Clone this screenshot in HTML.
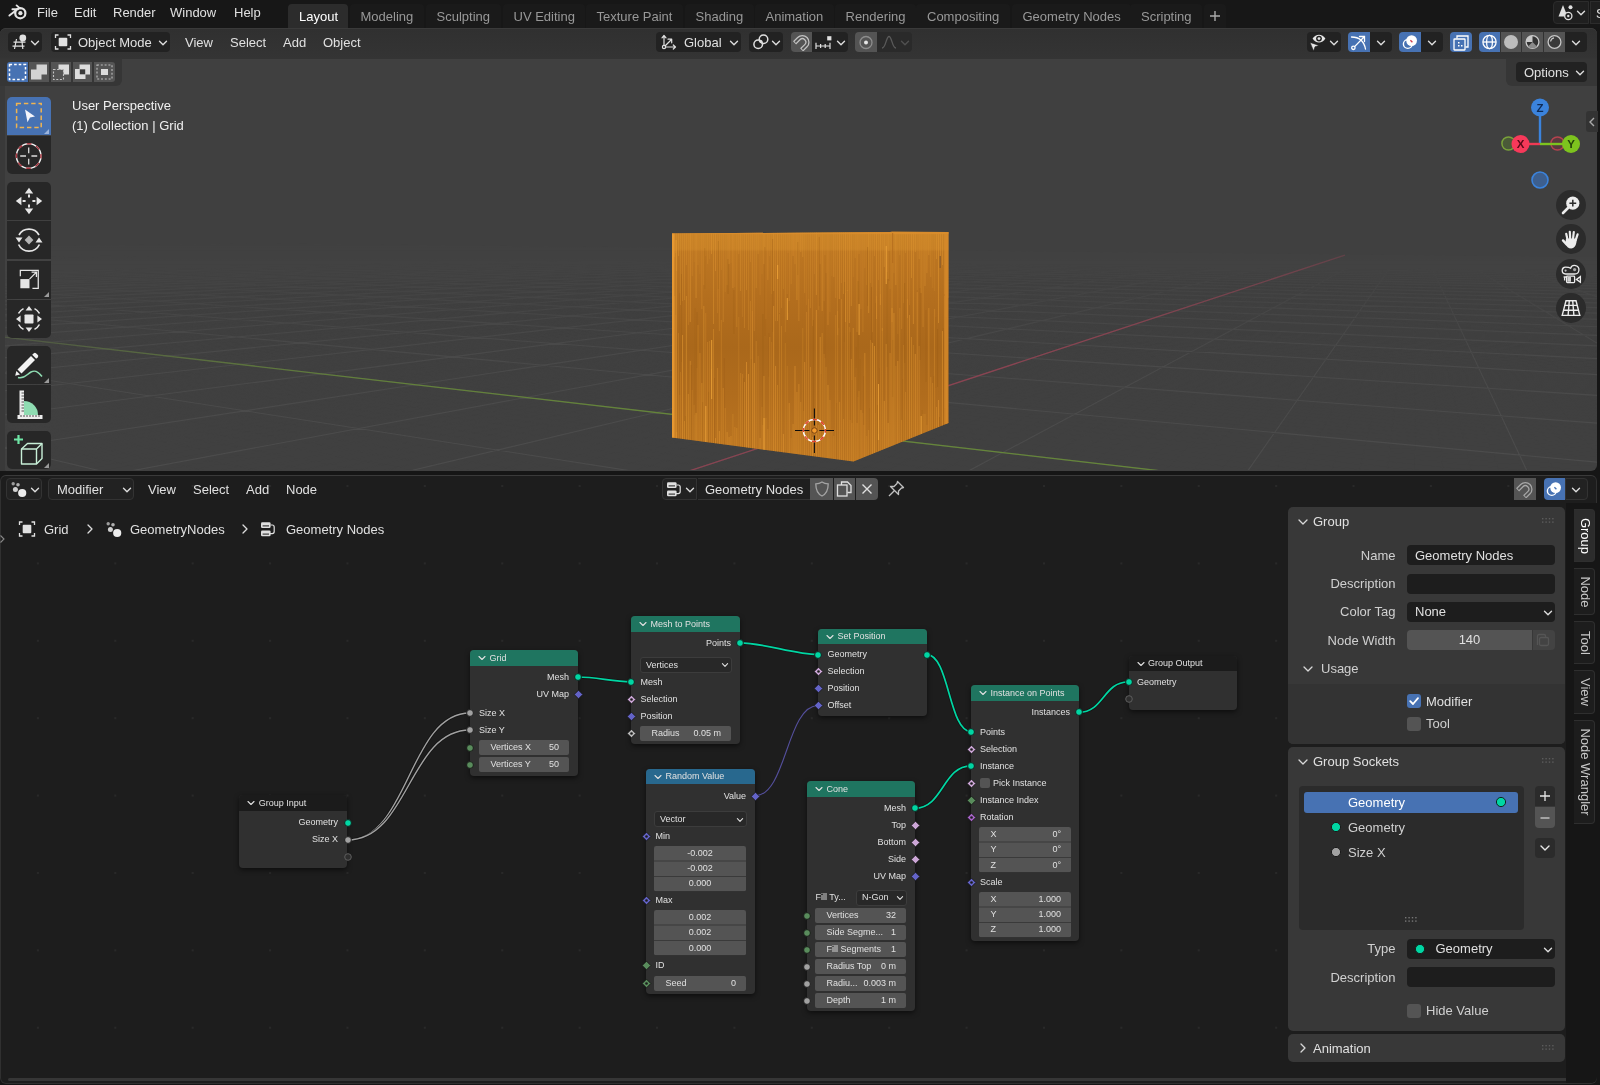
<!DOCTYPE html>
<html><head><meta charset="utf-8"><title>Blender</title><style>
html,body{margin:0;padding:0;background:#161616;}
body{width:1600px;height:1085px;position:relative;overflow:hidden;font-family:"Liberation Sans",sans-serif;font-size:13px;color:#e0e0e0;}
div,span,svg{position:absolute;box-sizing:border-box}
#root{left:0;top:0;width:1600px;height:1085px;will-change:transform;overflow:hidden}
.t{white-space:nowrap;line-height:16px;height:16px}
.dim{color:#989898}
.btn{background:#222;border-radius:4px}
.blue{background:#4772b3}
.gray{background:#545454}
.nt{white-space:nowrap;font-size:9px;line-height:11px;height:11px;color:#e0e0e0}
.node{border-radius:4px;background:#303030;box-shadow:0 2px 5px rgba(0,0,0,.55)}
.nh{left:0;top:0;right:0;height:17px;border-radius:4px 4px 0 0}
.fld{background:#545454;border-radius:2px;height:15px}
.dd{background:#282828;border:1px solid #3c3c3c;border-radius:3px;height:16px}
.panel{background:#383838;border-radius:5px}
.tf{background:#1d1d1d;border-radius:4px;height:20px}
</style></head><body><div id="root">
<div class="" style="left:0px;top:0px;width:1600px;height:28px;background:#171717"></div>
<svg style="left:5.6px;top:1.4px;" width="24" height="22" viewBox="0 0 24 22">
<g fill="none" stroke="#e6e6e6" stroke-linecap="round">
<path d="M3.4 14.6 L11.4 8.2 M6.4 8.2 H12 M10.6 4.4 L14 7.4" stroke-width="1.9"/>
<circle cx="14.3" cy="12.2" r="5.1" stroke-width="2.2"/>
</g><circle cx="14.4" cy="12.2" r="2.1" fill="#e6e6e6"/></svg>
<span class="t " style="left:37px;top:4.9px;">File</span>
<span class="t " style="left:74px;top:4.9px;">Edit</span>
<span class="t " style="left:113px;top:4.9px;">Render</span>
<span class="t " style="left:170px;top:4.9px;">Window</span>
<span class="t " style="left:234px;top:4.9px;">Help</span>
<div class="" style="left:288px;top:4px;width:60px;height:24px;background:#2c2c2c;border-radius:4px 4px 0 0"></div>
<span class="t " style="left:299px;top:8.5px;color:#fff">Layout</span>
<div class="" style="left:349.5px;top:4px;width:74.30000000000001px;height:24px;background:#1a1a1a;border-radius:4px 4px 0 0"></div>
<span class="t dim" style="left:360.5px;top:8.5px;">Modeling</span>
<div class="" style="left:425.5px;top:4px;width:75.0px;height:24px;background:#1a1a1a;border-radius:4px 4px 0 0"></div>
<span class="t dim" style="left:436.5px;top:8.5px;">Sculpting</span>
<div class="" style="left:502.5px;top:4px;width:82.89999999999998px;height:24px;background:#1a1a1a;border-radius:4px 4px 0 0"></div>
<span class="t dim" style="left:513.5px;top:8.5px;">UV Editing</span>
<div class="" style="left:585.5px;top:4px;width:97.39999999999998px;height:24px;background:#1a1a1a;border-radius:4px 4px 0 0"></div>
<span class="t dim" style="left:596.5px;top:8.5px;">Texture Paint</span>
<div class="" style="left:684.5px;top:4px;width:69.20000000000005px;height:24px;background:#1a1a1a;border-radius:4px 4px 0 0"></div>
<span class="t dim" style="left:695.5px;top:8.5px;">Shading</span>
<div class="" style="left:754.5px;top:4px;width:79.29999999999995px;height:24px;background:#1a1a1a;border-radius:4px 4px 0 0"></div>
<span class="t dim" style="left:765.5px;top:8.5px;">Animation</span>
<div class="" style="left:834.5px;top:4px;width:81.5px;height:24px;background:#1a1a1a;border-radius:4px 4px 0 0"></div>
<span class="t dim" style="left:845.5px;top:8.5px;">Rendering</span>
<div class="" style="left:916px;top:4px;width:93.79999999999995px;height:24px;background:#1a1a1a;border-radius:4px 4px 0 0"></div>
<span class="t dim" style="left:927px;top:8.5px;">Compositing</span>
<div class="" style="left:1011.5px;top:4px;width:119.79999999999995px;height:24px;background:#1a1a1a;border-radius:4px 4px 0 0"></div>
<span class="t dim" style="left:1022.5px;top:8.5px;">Geometry Nodes</span>
<div class="" style="left:1130px;top:4px;width:72.09999999999991px;height:24px;background:#1a1a1a;border-radius:4px 4px 0 0"></div>
<span class="t dim" style="left:1141px;top:8.5px;">Scripting</span>
<div class="" style="left:1204px;top:4px;width:22px;height:24px;background:#1a1a1a;border-radius:4px 4px 0 0"></div>
<svg style="left:1209px;top:10px;" width="12" height="12" viewBox="0 0 12 12"><path d="M6 1 V11 M1 6 H11" stroke="#aaa" stroke-width="1.4" fill="none"/></svg>
<div class="" style="left:1553px;top:1px;width:36px;height:23px;background:#1f1f1f;border-radius:4px 0 0 4px;border:1px solid #2c2c2c"></div>
<div class="" style="left:1590px;top:1px;width:14px;height:23px;background:#1f1f1f;border:1px solid #2c2c2c"></div>
<svg style="left:1556px;top:3px;" width="20" height="19" viewBox="0 0 20 19"><path d="M7 2 L11.5 13.5 H2.5 Z" fill="#e0e0e0"/><circle cx="14.5" cy="4.3" r="2" fill="#e0e0e0"/><circle cx="12.3" cy="13" r="3.6" fill="#1f1f1f" stroke="#e0e0e0" stroke-width="1.3"/><circle cx="12.3" cy="13" r="1.2" fill="#e0e0e0"/></svg>
<svg style="left:1575px;top:7px" width="12" height="12" viewBox="-6 -6 12 12"><path d="M-3.5 -1.75 L0 1.75 L3.5 -1.75" fill="none" stroke="#ddd" stroke-width="1.4" stroke-linecap="round" stroke-linejoin="round"/></svg>
<span class="t " style="left:1596px;top:5.5px;">S</span>
<div class="" style="left:0px;top:28px;width:1597px;height:442.5px;background:#404040;border-radius:6px;overflow:hidden"></div>
<div class="" style="left:0px;top:28px;width:1597px;height:30.5px;background:linear-gradient(#303030,#343434);border-radius:6px 6px 0 0;border-top:1px solid #3a3a3a"></div>
<div class="btn" style="left:8px;top:32px;width:34px;height:20px;"></div>
<svg style="left:11px;top:33px;" width="18" height="18" viewBox="0 0 18 18"><g stroke="#e0e0e0" stroke-width="1.2" fill="none"><path d="M2.5 9.2 H14.5 M1.5 13.2 H13.5 M5.5 6 L3.5 16 M10.8 6.5 L11.8 16"/></g><circle cx="11.8" cy="5" r="3.4" fill="#e0e0e0"/></svg>
<svg style="left:29px;top:37px" width="12" height="12" viewBox="-6 -6 12 12"><path d="M-3.5 -1.75 L0 1.75 L3.5 -1.75" fill="none" stroke="#ddd" stroke-width="1.4" stroke-linecap="round" stroke-linejoin="round"/></svg>
<div class="btn" style="left:51px;top:32px;width:119px;height:20px;"></div>
<svg style="left:54px;top:33px;" width="18" height="18" viewBox="0 0 18 18"><g stroke="#e0e0e0" stroke-width="1.3" fill="none"><path d="M1.5 5 V2 H4.5 M13.5 2 H16.5 V5 M16.5 13 V16 H13.5 M4.5 16 H1.5 V13"/></g><rect x="4.7" y="4.7" width="8.6" height="8.6" rx="1" fill="#e0e0e0"/></svg>
<span class="t " style="left:78px;top:35.1px;">Object Mode</span>
<svg style="left:157px;top:37px" width="12" height="12" viewBox="-6 -6 12 12"><path d="M-3.5 -1.75 L0 1.75 L3.5 -1.75" fill="none" stroke="#ddd" stroke-width="1.4" stroke-linecap="round" stroke-linejoin="round"/></svg>
<span class="t " style="left:185px;top:35.1px;">View</span>
<span class="t " style="left:230px;top:35.1px;">Select</span>
<span class="t " style="left:283px;top:35.1px;">Add</span>
<span class="t " style="left:323px;top:35.1px;">Object</span>
<div class="btn" style="left:656px;top:32px;width:85px;height:20px;"></div>
<svg style="left:659px;top:33px;" width="20" height="18" viewBox="0 0 20 18"><g stroke="#e0e0e0" stroke-width="1.2" fill="none" stroke-linecap="round" stroke-linejoin="round"><path d="M5 14 V2.5 M3 4.8 L5 2.5 L7 4.8 M5 14 H16.5 M14.3 12 L16.5 14 L14.3 16 M5.5 13.5 L12.5 6.5 M9 6.2 H12.7 V9.8"/><circle cx="5" cy="14" r="1.6" fill="#222"/></g></svg>
<span class="t " style="left:684px;top:35.1px;">Global</span>
<svg style="left:728px;top:37px" width="12" height="12" viewBox="-6 -6 12 12"><path d="M-3.5 -1.75 L0 1.75 L3.5 -1.75" fill="none" stroke="#ddd" stroke-width="1.4" stroke-linecap="round" stroke-linejoin="round"/></svg>
<div class="btn" style="left:749px;top:32px;width:34px;height:20px;"></div>
<svg style="left:751px;top:33px;" width="20" height="18" viewBox="0 0 20 18"><g stroke="#e0e0e0" stroke-width="1.5" fill="none"><circle cx="7.2" cy="11.3" r="4.3"/><circle cx="12.5" cy="6.3" r="4.3"/></g><circle cx="10" cy="8.6" r="1.5" fill="#e0e0e0"/></svg>
<svg style="left:770px;top:37px" width="12" height="12" viewBox="-6 -6 12 12"><path d="M-3.5 -1.75 L0 1.75 L3.5 -1.75" fill="none" stroke="#ddd" stroke-width="1.4" stroke-linecap="round" stroke-linejoin="round"/></svg>
<div class="gray" style="left:791px;top:32px;width:21px;height:20px;border-radius:4px 0 0 4px"></div>
<svg style="left:792px;top:33px;" width="20" height="18" viewBox="0 0 20 18"><g transform="rotate(-135 10 9.5)"><path d="M5 4 V10 A5 5 0 0 0 15 10 V4" stroke="#c4c4c4" stroke-width="4.4" fill="none"/><path d="M5 4.9 V10 A5 5 0 0 0 15 10 V4.9" stroke="#545454" stroke-width="1.9" fill="none"/></g></svg>
<div class="btn" style="left:812px;top:32px;width:36px;height:20px;border-radius:0 4px 4px 0"></div>
<svg style="left:814px;top:33px;" width="20" height="18" viewBox="0 0 20 18"><g stroke="#e0e0e0" stroke-width="1.2" fill="none"><path d="M2 13 H16 M2 9.8 V16 M6.6 11 V15 M11.2 11 V15 M16 9.8 V16"/></g><rect x="13.2" y="3.2" width="4.2" height="4.2" fill="#e0e0e0"/></svg>
<svg style="left:835px;top:37px" width="12" height="12" viewBox="-6 -6 12 12"><path d="M-3.5 -1.75 L0 1.75 L3.5 -1.75" fill="none" stroke="#ddd" stroke-width="1.4" stroke-linecap="round" stroke-linejoin="round"/></svg>
<div class="gray" style="left:855px;top:32px;width:22px;height:20px;border-radius:4px 0 0 4px"></div>
<svg style="left:856px;top:33px;" width="20" height="18" viewBox="0 0 20 18"><circle cx="10" cy="9.5" r="6" stroke="#8d8d8d" stroke-width="1.3" fill="none"/><circle cx="10" cy="9.5" r="2" fill="#e6e6e6"/></svg>
<div class="" style="left:877px;top:32px;width:35px;height:20px;background:#2a2a2a;border-radius:0 4px 4px 0"></div>
<svg style="left:880px;top:33px;" width="20" height="18" viewBox="0 0 20 18"><path d="M2 15 C6 15 6 3.5 9 3.5 C12 3.5 12 15 16 15" stroke="#5a5a5a" stroke-width="1.3" fill="none"/></svg>
<svg style="left:899px;top:37px" width="12" height="12" viewBox="-6 -6 12 12"><path d="M-3.5 -1.75 L0 1.75 L3.5 -1.75" fill="none" stroke="#505050" stroke-width="1.4" stroke-linecap="round" stroke-linejoin="round"/></svg>
<div class="btn" style="left:1307px;top:32px;width:34px;height:20px;"></div>
<svg style="left:1309px;top:32px;" width="22" height="20" viewBox="0 0 22 20"><path d="M3.6 6.6 C6.6 1.4 13.4 1.4 16.4 6.6 C13.4 11.8 6.6 11.8 3.6 6.6 Z" fill="#e6e6e6"/><circle cx="10" cy="6.6" r="2.9" fill="#222"/><circle cx="10" cy="6.6" r="1.4" fill="#e6e6e6"/><path d="M1 10.4 L10 13.4 L6 14.8 L4.6 19 Z" fill="#e6e6e6" stroke="#222" stroke-width="0.6"/></svg>
<svg style="left:1328px;top:37px" width="12" height="12" viewBox="-6 -6 12 12"><path d="M-3.5 -1.75 L0 1.75 L3.5 -1.75" fill="none" stroke="#ddd" stroke-width="1.4" stroke-linecap="round" stroke-linejoin="round"/></svg>
<div class="blue" style="left:1348px;top:32px;width:22px;height:20px;border-radius:4px 0 0 4px"></div>
<svg style="left:1349px;top:33px;" width="20" height="18" viewBox="0 0 20 18"><g stroke="#fff" stroke-width="1.3" fill="none" stroke-linecap="round"><path d="M2.5 4 C10 4 15 8 16.5 16"/><path d="M5.6 13.6 L15 4 M10.5 3.5 H15.5 V8.5"/><circle cx="4.4" cy="14.8" r="1.7"/></g></svg>
<div class="btn" style="left:1370px;top:32px;width:22px;height:20px;border-radius:0 4px 4px 0"></div>
<svg style="left:1375px;top:37px" width="12" height="12" viewBox="-6 -6 12 12"><path d="M-3.5 -1.75 L0 1.75 L3.5 -1.75" fill="none" stroke="#ddd" stroke-width="1.4" stroke-linecap="round" stroke-linejoin="round"/></svg>
<div class="blue" style="left:1399px;top:32px;width:22px;height:20px;border-radius:4px 0 0 4px"></div>
<svg style="left:1400px;top:33px;" width="20" height="18" viewBox="0 0 20 18"><circle cx="11.6" cy="7.6" r="5.4" fill="#fff"/><circle cx="7.8" cy="11" r="4.4" stroke="#fff" stroke-width="1.4" fill="none"/><path d="M10.4 7.2 L12.4 9.2" stroke="#d23a4a" stroke-width="1.3"/></svg>
<div class="btn" style="left:1421px;top:32px;width:22px;height:20px;border-radius:0 4px 4px 0"></div>
<svg style="left:1426px;top:37px" width="12" height="12" viewBox="-6 -6 12 12"><path d="M-3.5 -1.75 L0 1.75 L3.5 -1.75" fill="none" stroke="#ddd" stroke-width="1.4" stroke-linecap="round" stroke-linejoin="round"/></svg>
<div class="blue" style="left:1450px;top:32px;width:22px;height:20px;border-radius:4px"></div>
<svg style="left:1451px;top:33px;" width="20" height="18" viewBox="0 0 20 18"><g stroke="#fff" stroke-width="1.3" fill="none"><path d="M6 5.5 V3 H17 V14 H14.5"/><rect x="3" y="6" width="11" height="11" rx="0.5"/></g><rect x="7" y="9" width="1.5" height="1.5" fill="#fff"/><rect x="10" y="12" width="1.5" height="1.5" fill="#fff"/><rect x="7" y="12" width="1.5" height="1.5" fill="#fff"/></svg>
<div class="blue" style="left:1479px;top:32px;width:21px;height:20px;border-radius:4px 0 0 4px"></div>
<svg style="left:1480px;top:33px;" width="20" height="18" viewBox="0 0 20 18"><g stroke="#fff" stroke-width="1.3" fill="none"><circle cx="9.5" cy="9" r="6.6"/><ellipse cx="9.5" cy="9" rx="2.9" ry="6.6"/><path d="M3 9 H16"/></g></svg>
<div class="gray" style="left:1501px;top:32px;width:20px;height:20px;"></div>
<svg style="left:1501px;top:33px;" width="20" height="18" viewBox="0 0 20 18"><circle cx="10" cy="9" r="7" fill="#bdbdbd"/></svg>
<div class="gray" style="left:1522px;top:32px;width:21px;height:20px;"></div>
<svg style="left:1522px;top:33px;" width="21" height="18" viewBox="0 0 21 18"><circle cx="10.5" cy="9" r="6.4" fill="#333" stroke="#c8c8c8" stroke-width="1.3"/><path d="M10.5 9 V2.6 A6.4 6.4 0 0 0 4.1 9 Z" fill="#c8c8c8"/><path d="M10.5 9 L15 13.5 A6.4 6.4 0 0 1 6 13.5 Z" fill="#8a8a8a"/></svg>
<div class="gray" style="left:1544px;top:32px;width:21px;height:20px;"></div>
<svg style="left:1544px;top:33px;" width="21" height="18" viewBox="0 0 21 18"><circle cx="10.5" cy="9" r="6.4" fill="#3a3a3a" stroke="#c8c8c8" stroke-width="1.3"/><path d="M6.6 8.5 A4.2 4.2 0 0 1 10 4.8" stroke="#c8c8c8" stroke-width="1.2" fill="none"/></svg>
<div class="btn" style="left:1565px;top:32px;width:22px;height:20px;border-radius:0 4px 4px 0"></div>
<svg style="left:1570px;top:37px" width="12" height="12" viewBox="-6 -6 12 12"><path d="M-3.5 -1.75 L0 1.75 L3.5 -1.75" fill="none" stroke="#ddd" stroke-width="1.4" stroke-linecap="round" stroke-linejoin="round"/></svg>
<svg style="left:0;top:57px" width="1597" height="413" viewBox="0 57 1597 413">
<defs><linearGradient id="fade" x1="0" y1="232" x2="0" y2="470" gradientUnits="userSpaceOnUse"><stop offset="0" stop-color="#fff" stop-opacity="0"/><stop offset="0.12" stop-color="#fff" stop-opacity="0.15"/><stop offset="0.5" stop-color="#fff" stop-opacity="0.8"/><stop offset="1" stop-color="#fff" stop-opacity="1"/></linearGradient>
<linearGradient id="gfade" x1="0" y1="0" x2="700" y2="0" gradientUnits="userSpaceOnUse"><stop offset="0" stop-color="#65853a" stop-opacity="0.25"/><stop offset="0.5" stop-color="#65853a" stop-opacity="0.9"/><stop offset="1" stop-color="#65853a" stop-opacity="1"/></linearGradient>
<linearGradient id="fade2" x1="0" y1="232" x2="0" y2="470" gradientUnits="userSpaceOnUse"><stop offset="0" stop-color="#fff" stop-opacity="0.15"/><stop offset="0.15" stop-color="#fff" stop-opacity="0.6"/><stop offset="0.45" stop-color="#fff" stop-opacity="1"/><stop offset="1" stop-color="#fff" stop-opacity="1"/></linearGradient>
<mask id="gm2" maskUnits="userSpaceOnUse" x="0" y="57" width="1597" height="413"><rect x="0" y="232" width="1597" height="240" fill="url(#fade2)"/></mask>
<mask id="gm" maskUnits="userSpaceOnUse" x="0" y="57" width="1597" height="413"><rect x="0" y="232" width="1597" height="240" fill="url(#fade)"/></mask></defs>
<g mask="url(#gm)" fill="none">
<path d="M5244.0 1224.5 L1811.8 334.8 M5128.0 1224.5 L1797.8 334.3 M5012.0 1224.5 L1783.9 333.8 M4896.0 1224.5 L1770.2 333.3 M4780.0 1224.5 L1756.6 332.8 M4664.0 1224.5 L1743.2 332.3 M4548.0 1224.5 L1729.9 331.7 M4432.0 1224.5 L1716.7 331.2 M4316.0 1224.5 L1703.7 330.8 M4084.0 1224.5 L1678.0 329.8 M3968.0 1224.5 L1665.3 329.3 M3852.0 1224.5 L1652.8 328.8 M3736.0 1224.5 L1640.3 328.4 M3620.0 1224.5 L1628.0 327.9 M3504.0 1224.5 L1615.9 327.4 M3388.0 1224.5 L1603.8 327.0 M3272.0 1224.5 L1591.9 326.5 M-1576.8 1224.5 L-988.9 355.9 M3156.0 1224.5 L1580.0 326.1 M-1356.4 1224.5 L-960.7 354.5 M2924.0 1224.5 L1556.7 325.2 M-915.6 1224.5 L-906.3 351.7 M2808.0 1224.5 L1545.2 324.8 M-695.2 1224.5 L-880.0 350.3 M2692.0 1224.5 L1533.8 324.3 M-474.8 1224.5 L-854.3 349.0 M2576.0 1224.5 L1522.5 323.9 M-254.4 1224.5 L-829.2 347.7 M2460.0 1224.5 L1511.3 323.5 M-34.0 1224.5 L-804.6 346.4 M2344.0 1224.5 L1500.2 323.1 M186.4 1224.5 L-780.6 345.2 M2228.0 1224.5 L1489.2 322.6 M406.8 1224.5 L-757.0 344.0 M2112.0 1224.5 L1478.4 322.2 M627.2 1224.5 L-734.0 342.8 M1996.0 1224.5 L1467.6 321.8 M847.6 1224.5 L-711.4 341.6 M1764.0 1224.5 L1446.3 321.0 M1288.4 1224.5 L-667.7 339.4 M1648.0 1224.5 L1435.8 320.6 M1508.8 1224.5 L-646.6 338.3 M1532.0 1224.5 L1425.4 320.2 M1729.2 1224.5 L-625.8 337.2 M1416.0 1224.5 L1415.1 319.8 M1949.6 1224.5 L-605.5 336.1 M1300.0 1224.5 L1404.9 319.4 M2170.0 1224.5 L-585.5 335.1 M1184.0 1224.5 L1394.7 319.1 M2390.4 1224.5 L-566.0 334.1 M1068.0 1224.5 L1384.7 318.7 M2610.8 1224.5 L-546.8 333.1 M952.0 1224.5 L1374.7 318.3 M2831.2 1224.5 L-528.0 332.2 M836.0 1224.5 L1364.9 317.9 M3051.6 1224.5 L-509.5 331.2 M604.0 1224.5 L1345.4 317.2 M3492.4 1224.5 L-473.7 329.4 M488.0 1224.5 L1335.8 316.8 M3712.8 1224.5 L-456.2 328.5 M372.0 1224.5 L1326.2 316.5 M3933.2 1224.5 L-439.1 327.6 M256.0 1224.5 L1316.8 316.1 M4153.6 1224.5 L-422.3 326.7 M140.0 1224.5 L1307.4 315.8 M4374.0 1224.5 L-405.8 325.9 M24.0 1224.5 L1298.1 315.4 M4594.4 1224.5 L-389.6 325.0 M-92.0 1224.5 L1288.9 315.1 M4814.8 1224.5 L-373.7 324.2 M-208.0 1224.5 L1279.8 314.7 M5035.2 1224.5 L-358.0 323.4 M-324.0 1224.5 L1270.7 314.4 M5255.6 1224.5 L-342.6 322.6 M-556.0 1224.5 L1252.8 313.7 M5696.4 1224.5 L-312.7 321.1 M-672.0 1224.5 L1243.9 313.4 M5916.8 1224.5 L-298.1 320.3 M-788.0 1224.5 L1235.2 313.0 M6137.2 1224.5 L-283.7 319.6 M-904.0 1224.5 L1226.5 312.7 M6357.6 1224.5 L-269.6 318.8 M-1020.0 1224.5 L1217.8 312.4 M6578.0 1224.5 L-255.7 318.1 M-1136.0 1224.5 L1209.3 312.0 M6798.4 1224.5 L-242.1 317.4 M-1252.0 1224.5 L1200.8 311.7 M7018.8 1224.5 L-228.6 316.7 M-1368.0 1224.5 L1192.4 311.4 M7239.2 1224.5 L-215.4 316.0 M-1484.0 1224.5 L1184.0 311.1 M7459.6 1224.5 L-202.4 315.4 M-1716.0 1224.5 L1167.5 310.5 M7900.4 1224.5 L-177.0 314.1 M-1832.0 1224.5 L1159.3 310.1 M8120.8 1224.5 L-164.6 313.4 M-1948.0 1224.5 L1151.2 309.8 M8341.2 1224.5 L-152.4 312.8 M-2064.0 1224.5 L1143.2 309.5 M8561.6 1224.5 L-140.3 312.2 M-2180.0 1224.5 L1135.2 309.2 M8782.0 1224.5 L-128.5 311.6 M-2296.0 1224.5 L1127.3 308.9 M9002.4 1224.5 L-116.8 311.0 M-2412.0 1224.5 L1119.5 308.6 M9222.8 1224.5 L-105.3 310.4 M-2528.0 1224.5 L1111.7 308.3 M9443.2 1224.5 L-94.0 309.8 M-2644.0 1224.5 L1104.0 308.1 M9663.6 1224.5 L-82.9 309.2 M-2876.0 1224.5 L1088.7 307.5 M10104.4 1224.5 L-61.0 308.1 M-2992.0 1224.5 L1081.1 307.2 M10324.8 1224.5 L-50.4 307.5 M-3108.0 1224.5 L1073.6 306.9 M10545.2 1224.5 L-39.9 307.0 M-3224.0 1224.5 L1066.2 306.6 M10765.6 1224.5 L-29.5 306.5 M-3340.0 1224.5 L1058.8 306.3 M10986.0 1224.5 L-19.3 305.9 M-3456.0 1224.5 L1051.5 306.1 M11206.4 1224.5 L-9.2 305.4 M-3572.0 1224.5 L1044.2 305.8 M11426.8 1224.5 L0.8 304.9 M-3688.0 1224.5 L1037.0 305.5 M11647.2 1224.5 L10.6 304.4 M-3804.0 1224.5 L1029.8 305.2 M11867.6 1224.5 L20.2 303.9 M-4036.0 1224.5 L1015.7 304.7 M12308.4 1224.5 L39.2 302.9 M-4152.0 1224.5 L1008.6 304.4 M12528.8 1224.5 L48.4 302.4 M-4268.0 1224.5 L1001.7 304.2 M12749.2 1224.5 L57.6 302.0 M-4384.0 1224.5 L994.8 303.9 M12969.6 1224.5 L66.6 301.5 M-4500.0 1224.5 L987.9 303.7 M13190.0 1224.5 L75.5 301.0 M-4616.0 1224.5 L981.1 303.4 M13410.4 1224.5 L84.3 300.6 M-4732.0 1224.5 L974.4 303.1 M13630.8 1224.5 L93.0 300.1 M-4848.0 1224.5 L967.6 302.9 M13851.2 1224.5 L101.6 299.7 M-4964.0 1224.5 L961.0 302.6 M14071.6 1224.5 L110.0 299.3 M-5196.0 1224.5 L947.8 302.1 M14512.4 1224.5 L126.6 298.4 M-5312.0 1224.5 L941.3 301.9 M14732.8 1224.5 L134.7 298.0 M-5428.0 1224.5 L934.8 301.6 M14953.2 1224.5 L142.8 297.6 M-5544.0 1224.5 L928.4 301.4 M15173.6 1224.5 L150.7 297.2 M-5660.0 1224.5 L922.0 301.2 M15394.0 1224.5 L158.6 296.8 M-5776.0 1224.5 L915.6 300.9 M15614.4 1224.5 L166.3 296.4 M-5892.0 1224.5 L909.3 300.7 M15834.8 1224.5 L173.9 296.0 M-6008.0 1224.5 L903.1 300.4 M16055.2 1224.5 L181.5 295.6 M-6124.0 1224.5 L896.9 300.2 M16275.6 1224.5 L189.0 295.2 M-6356.0 1224.5 L884.6 299.7 M16716.4 1224.5 L203.6 294.4 M-6472.0 1224.5 L878.5 299.5 M16936.8 1224.5 L210.8 294.1 M-6588.0 1224.5 L872.4 299.3 M17157.2 1224.5 L217.9 293.7 M-6704.0 1224.5 L866.4 299.1 M17377.6 1224.5 L225.0 293.3 M-6820.0 1224.5 L860.5 298.8 M17598.0 1224.5 L231.9 293.0 M-6936.0 1224.5 L854.5 298.6 M17818.4 1224.5 L238.8 292.6 M-7052.0 1224.5 L848.6 298.4 M18038.8 1224.5 L245.5 292.3 M-7168.0 1224.5 L842.8 298.2 M18259.2 1224.5 L252.3 291.9 M-7284.0 1224.5 L837.0 297.9 M18479.6 1224.5 L258.9 291.6 M-7516.0 1224.5 L825.5 297.5 M18920.4 1224.5 L271.9 290.9 M-7632.0 1224.5 L819.8 297.3 M19140.8 1224.5 L278.3 290.6 M-7748.0 1224.5 L814.1 297.1 M19361.2 1224.5 L284.7 290.3 M-7864.0 1224.5 L808.5 296.9 M19581.6 1224.5 L290.9 289.9 M-7980.0 1224.5 L802.9 296.7 M19802.0 1224.5 L297.1 289.6 M-8096.0 1224.5 L797.4 296.4 M20022.4 1224.5 L303.3 289.3 M-8212.0 1224.5 L791.9 296.2 M20242.8 1224.5 L309.3 289.0 M-8328.0 1224.5 L786.4 296.0 M20463.2 1224.5 L315.3 288.7 M-8444.0 1224.5 L781.0 295.8 M20683.6 1224.5 L321.3 288.4 M-8676.0 1224.5 L770.2 295.4 M21124.4 1224.5 L333.0 287.8 M-8792.0 1224.5 L764.9 295.2 M21344.8 1224.5 L338.7 287.5 M-8908.0 1224.5 L759.6 295.0 M21565.2 1224.5 L344.4 287.2 M-9024.0 1224.5 L754.3 294.8 M21785.6 1224.5 L350.0 286.9 M-9140.0 1224.5 L749.1 294.6 M22006.0 1224.5 L355.6 286.6 M-9256.0 1224.5 L743.9 294.4 M22226.4 1224.5 L361.1 286.3 M-9372.0 1224.5 L738.7 294.2 M22446.8 1224.5 L366.5 286.0 M-9488.0 1224.5 L733.6 294.0 M22667.2 1224.5 L371.9 285.8 M-9604.0 1224.5 L728.5 293.8 M22887.6 1224.5 L377.3 285.5 M-9836.0 1224.5 L718.3 293.5 M23328.4 1224.5 L387.8 284.9 M-9952.0 1224.5 L713.3 293.3 M23548.8 1224.5 L393.0 284.7 M-10068.0 1224.5 L708.4 293.1 M23769.2 1224.5 L398.1 284.4 M-10184.0 1224.5 L703.4 292.9 M23989.6 1224.5 L403.2 284.2 M-10300.0 1224.5 L698.5 292.7 M24210.0 1224.5 L408.2 283.9 M-10416.0 1224.5 L693.6 292.5 M24430.4 1224.5 L413.2 283.6 M-10532.0 1224.5 L688.7 292.3 M24650.8 1224.5 L418.1 283.4 M-10648.0 1224.5 L683.9 292.2 M24871.2 1224.5 L423.0 283.1 M-10764.0 1224.5 L679.1 292.0 M25091.6 1224.5 L427.8 282.9 M-10996.0 1224.5 L669.6 291.6 M25532.4 1224.5 L437.3 282.4 M-11112.0 1224.5 L664.9 291.4 M25752.8 1224.5 L442.0 282.2 M-11228.0 1224.5 L660.2 291.3 M25973.2 1224.5 L446.7 281.9 M-11344.0 1224.5 L655.5 291.1 M26193.6 1224.5 L451.3 281.7 M-11460.0 1224.5 L650.9 290.9 M26414.0 1224.5 L455.8 281.4 M-11576.0 1224.5 L646.3 290.7 M26634.4 1224.5 L460.4 281.2 M-11692.0 1224.5 L641.7 290.6 M26854.8 1224.5 L464.8 281.0 M-11808.0 1224.5 L637.2 290.4 M27075.2 1224.5 L469.3 280.7 M-11924.0 1224.5 L632.7 290.2 M27295.6 1224.5 L473.7 280.5 M-12156.0 1224.5 L623.7 289.9 M27736.4 1224.5 L482.3 280.1 M-12272.0 1224.5 L619.2 289.7 M27956.8 1224.5 L486.6 279.9 M-12388.0 1224.5 L614.8 289.5 M28177.2 1224.5 L490.8 279.6 M-12504.0 1224.5 L610.4 289.4 M28397.6 1224.5 L495.0 279.4 M-12620.0 1224.5 L606.1 289.2 M28618.0 1224.5 L499.2 279.2 M-12736.0 1224.5 L601.7 289.0 M28838.4 1224.5 L503.3 279.0 M-12852.0 1224.5 L597.4 288.9 M29058.8 1224.5 L507.4 278.8 M-12968.0 1224.5 L593.1 288.7 M29279.2 1224.5 L511.4 278.6 M-13084.0 1224.5 L588.8 288.6 M29499.6 1224.5 L515.4 278.4 M-13316.0 1224.5 L580.4 288.2 M29940.4 1224.5 L523.4 278.0 M-13432.0 1224.5 L576.2 288.1 M30160.8 1224.5 L527.3 277.8 M-13548.0 1224.5 L572.0 287.9 M30381.2 1224.5 L531.1 277.6 M-13664.0 1224.5 L567.9 287.8 M30601.6 1224.5 L535.0 277.4 M-13780.0 1224.5 L563.7 287.6 M30822.0 1224.5 L538.8 277.2 M-13896.0 1224.5 L559.6 287.4 M31042.4 1224.5 L542.5 277.0 M-14012.0 1224.5 L555.6 287.3 M31262.8 1224.5 L546.3 276.8 M-14128.0 1224.5 L551.5 287.1 M31483.2 1224.5 L550.0 276.6 M-14244.0 1224.5 L547.5 287.0 M31703.6 1224.5 L553.7 276.4 M-14476.0 1224.5 L539.5 286.7 M32144.4 1224.5 L560.9 276.0 M-14592.0 1224.5 L535.5 286.5 M32364.8 1224.5 L564.5 275.8 M-14708.0 1224.5 L531.5 286.4 M32585.2 1224.5 L568.1 275.7 M-14824.0 1224.5 L527.6 286.2 M32805.6 1224.5 L571.6 275.5 M-14940.0 1224.5 L523.7 286.1 M33026.0 1224.5 L575.1 275.3 M-15056.0 1224.5 L519.8 285.9 M33246.4 1224.5 L578.6 275.1 M-15172.0 1224.5 L516.0 285.8 M33466.8 1224.5 L582.0 274.9 M-15288.0 1224.5 L512.1 285.6 M33687.2 1224.5 L585.4 274.8 M-15404.0 1224.5 L508.3 285.5 M33907.6 1224.5 L588.8 274.6 M-15636.0 1224.5 L500.7 285.2 M34348.4 1224.5 L595.5 274.2 M-15752.0 1224.5 L497.0 285.1 M34568.8 1224.5 L598.8 274.1 M-15868.0 1224.5 L493.2 284.9 M34789.2 1224.5 L602.0 273.9 M-15984.0 1224.5 L489.5 284.8 M35009.6 1224.5 L605.3 273.7 M-16100.0 1224.5 L485.8 284.7 M35230.0 1224.5 L608.5 273.6 M-16216.0 1224.5 L482.1 284.5 M35450.4 1224.5 L611.7 273.4 M-16332.0 1224.5 L478.5 284.4 M35670.8 1224.5 L614.9 273.2 M-16448.0 1224.5 L474.8 284.2 M35891.2 1224.5 L618.0 273.1 M-16564.0 1224.5 L471.2 284.1 M36111.6 1224.5 L621.1 272.9 M-16796.0 1224.5 L464.0 283.8 M36552.4 1224.5 L627.3 272.6 M-16912.0 1224.5 L460.5 283.7 M36772.8 1224.5 L630.4 272.4 M-17028.0 1224.5 L456.9 283.6 M36993.2 1224.5 L633.4 272.3 M-17144.0 1224.5 L453.4 283.4 M37213.6 1224.5 L636.4 272.1 M-17260.0 1224.5 L449.9 283.3 M37434.0 1224.5 L639.4 272.0 M-17376.0 1224.5 L446.4 283.2 M37654.4 1224.5 L642.3 271.8 M-17492.0 1224.5 L442.9 283.0 M37874.8 1224.5 L645.3 271.7 M-17608.0 1224.5 L439.5 282.9 M38095.2 1224.5 L648.2 271.5 M-17724.0 1224.5 L436.0 282.8 M38315.6 1224.5 L651.1 271.4 M-17956.0 1224.5 L429.2 282.5 M38756.4 1224.5 L656.8 271.1 M-18072.0 1224.5 L425.8 282.4 M38976.8 1224.5 L659.6 270.9 M-18188.0 1224.5 L422.4 282.3 M39197.2 1224.5 L662.4 270.8 M-18304.0 1224.5 L419.1 282.1 M39417.6 1224.5 L665.2 270.6 M-18420.0 1224.5 L415.8 282.0 M39638.0 1224.5 L668.0 270.5 M-18536.0 1224.5 L412.4 281.9 M39858.4 1224.5 L670.7 270.4 M-18652.0 1224.5 L409.1 281.7 M40078.8 1224.5 L673.4 270.2 M-18768.0 1224.5 L405.9 281.6 M40299.2 1224.5 L676.1 270.1 M-18884.0 1224.5 L402.6 281.5 M40519.6 1224.5 L678.8 269.9 M-19116.0 1224.5 L396.1 281.3 M40960.4 1224.5 L684.1 269.7 M-19232.0 1224.5 L392.9 281.1 M41180.8 1224.5 L686.7 269.5 M-19348.0 1224.5 L389.7 281.0 M41401.2 1224.5 L689.4 269.4 M-19464.0 1224.5 L386.5 280.9 M41621.6 1224.5 L691.9 269.3 M-19580.0 1224.5 L383.3 280.8 M41842.0 1224.5 L694.5 269.1 M-19696.0 1224.5 L380.1 280.7 M42062.4 1224.5 L697.1 269.0 M-19812.0 1224.5 L377.0 280.5 M42282.8 1224.5 L699.6 268.9 M-19928.0 1224.5 L373.9 280.4 M42503.2 1224.5 L702.1 268.7 M-20044.0 1224.5 L370.8 280.3 M42723.6 1224.5 L704.6 268.6" stroke="#454545" stroke-width="0.6" opacity="0.28"/>
<path d="M11856.7 1886.2 L1575.6 257.4 M9923.3 1886.2 L1544.2 257.1 M7990.0 1886.2 L1513.6 256.8 M6056.7 1886.2 L1483.8 256.5 M4123.3 1886.2 L1454.6 256.2 M-1290.0 1886.2 L-910.6 256.1 M2190.0 1886.2 L1426.2 255.9 M2383.3 1886.2 L-858.2 255.5 M256.7 1886.2 L1398.5 255.6 M6056.7 1886.2 L-808.1 255.0 M-1676.7 1886.2 L1371.4 255.4 M9730.0 1886.2 L-760.1 254.5 M-3610.0 1886.2 L1344.9 255.1 M13403.3 1886.2 L-714.2 254.1 M-5543.3 1886.2 L1319.0 254.8 M17076.7 1886.2 L-670.2 253.6 M-7476.7 1886.2 L1293.8 254.6 M20750.0 1886.2 L-628.0 253.2 M-9410.0 1886.2 L1269.0 254.3 M24423.3 1886.2 L-587.4 252.7 M-11343.3 1886.2 L1244.9 254.1 M28096.7 1886.2 L-548.4 252.3 M-13276.7 1886.2 L1221.3 253.8 M31770.0 1886.2 L-510.9 251.9 M-15210.0 1886.2 L1198.2 253.6 M35443.3 1886.2 L-474.8 251.6 M-17143.3 1886.2 L1175.5 253.3 M39116.7 1886.2 L-440.1 251.2 M-19076.7 1886.2 L1153.4 253.1 M42790.0 1886.2 L-406.6 250.9 M-21010.0 1886.2 L1131.7 252.9 M46463.3 1886.2 L-374.3 250.5 M-22943.3 1886.2 L1110.5 252.7 M50136.7 1886.2 L-343.1 250.2 M-24876.7 1886.2 L1089.7 252.5 M53810.0 1886.2 L-313.0 249.9 M-26810.0 1886.2 L1069.4 252.3 M57483.3 1886.2 L-283.8 249.6 M-28743.3 1886.2 L1049.4 252.1 M61156.7 1886.2 L-255.7 249.3 M-30676.7 1886.2 L1029.9 251.8 M64830.0 1886.2 L-228.5 249.0 M-32610.0 1886.2 L1010.7 251.7 M68503.3 1886.2 L-202.1 248.8 M-34543.3 1886.2 L992.0 251.5 M72176.7 1886.2 L-176.6 248.5 M-36476.7 1886.2 L973.5 251.3 M75850.0 1886.2 L-151.9 248.2 M-38410.0 1886.2 L955.5 251.1 M79523.3 1886.2 L-127.9 248.0 M-40343.3 1886.2 L937.8 250.9 M83196.7 1886.2 L-104.7 247.7 M-42276.7 1886.2 L920.4 250.7 M86870.0 1886.2 L-82.1 247.5 M-44210.0 1886.2 L903.3 250.6 M90543.3 1886.2 L-60.2 247.3 M-46143.3 1886.2 L886.6 250.4 M94216.7 1886.2 L-38.9 247.1 M-48076.7 1886.2 L870.1 250.2 M97890.0 1886.2 L-18.3 246.8 M-50010.0 1886.2 L854.0 250.0 M101563.3 1886.2 L1.8 246.6 M-51943.3 1886.2 L838.2 249.9 M105236.7 1886.2 L21.3 246.4 M-53876.7 1886.2 L822.6 249.7 M108910.0 1886.2 L40.3 246.2 M-55810.0 1886.2 L807.3 249.6 M112583.3 1886.2 L58.8 246.0 M-57743.3 1886.2 L792.3 249.4 M116256.7 1886.2 L76.8 245.9 M-59676.7 1886.2 L777.5 249.3 M119930.0 1886.2 L94.3 245.7 M-61610.0 1886.2 L763.0 249.1 M123603.3 1886.2 L111.4 245.5 M-63543.3 1886.2 L748.8 249.0 M127276.7 1886.2 L128.0 245.3 M-65476.7 1886.2 L734.7 248.8 M130950.0 1886.2 L144.2 245.2 M-67410.0 1886.2 L721.0 248.7 M134623.3 1886.2 L160.1 245.0 M-69343.3 1886.2 L707.4 248.5 M138296.7 1886.2 L175.5 244.8 M-71276.7 1886.2 L694.1 248.4 M141970.0 1886.2 L190.5 244.7 M-73210.0 1886.2 L681.0 248.3 M145643.3 1886.2 L205.2 244.5 M-75143.3 1886.2 L668.1 248.1 M149316.7 1886.2 L219.6 244.4 M-77076.7 1886.2 L655.4 248.0 M152990.0 1886.2 L233.6 244.2 M-79010.0 1886.2 L642.9 247.9 M156663.3 1886.2 L247.2 244.1 M-80943.3 1886.2 L630.6 247.8 M160336.7 1886.2 L260.6 244.0" stroke="#4c4c4c" stroke-width="1.1"/>
</g><g mask="url(#gm2)" fill="none"><path d="M-3610.0 1886.2 L1344.9 255.1" stroke="#8a4452" stroke-width="1.3"/>
<path d="M13403.3 1886.2 L-714.2 254.1" stroke="url(#gfade)" stroke-width="1.3"/>
</g></svg>
<svg style="left:660px;top:225px" width="300" height="245" viewBox="660 225 300 245">
<defs><clipPath id="cc"><polygon points="672,233.5 890,232 892,231.5 948.5,232 948.5,423 853.5,461.5 672,437.5"/></clipPath>
<linearGradient id="cg" x1="0" y1="232" x2="0" y2="462" gradientUnits="userSpaceOnUse"><stop offset="0" stop-color="#c98327"/><stop offset="0.075" stop-color="#c68026"/><stop offset="0.085" stop-color="#bc7622"/><stop offset="0.3" stop-color="#b36e1e"/><stop offset="0.5" stop-color="#aa681b"/><stop offset="0.7" stop-color="#b06c1d"/><stop offset="1" stop-color="#bb7521"/></linearGradient></defs>
<g clip-path="url(#cc)"><rect x="660" y="225" width="300" height="245" fill="url(#cg)"/>
<rect x="672.30" y="232" width="0.95" height="47" fill="#de9431" opacity="0.26"/><rect x="672.30" y="388" width="0.95" height="80" fill="#dc922f" opacity="0.33"/><rect x="674.24" y="232" width="0.95" height="25" fill="#de9431" opacity="0.40"/><rect x="674.24" y="296" width="0.95" height="172" fill="#dc922f" opacity="0.50"/><rect x="675.21" y="253" width="0.95" height="62" fill="#9e5f17" opacity="0.50"/><rect x="676.18" y="232" width="0.95" height="39" fill="#de9431" opacity="0.45"/><rect x="676.18" y="432" width="0.95" height="36" fill="#dc922f" opacity="0.56"/><rect x="678.12" y="232" width="0.95" height="24" fill="#de9431" opacity="0.54"/><rect x="678.12" y="333" width="0.95" height="135" fill="#dc922f" opacity="0.36"/><rect x="679.09" y="293" width="0.95" height="102" fill="#9e5f17" opacity="0.30"/><rect x="680.06" y="232" width="0.95" height="73" fill="#de9431" opacity="0.35"/><rect x="680.06" y="372" width="0.95" height="96" fill="#dc922f" opacity="0.33"/><rect x="681.03" y="274" width="0.95" height="88" fill="#9e5f17" opacity="0.38"/><rect x="682.00" y="232" width="0.95" height="69" fill="#de9431" opacity="0.38"/><rect x="682.00" y="335" width="0.95" height="133" fill="#dc922f" opacity="0.66"/><rect x="683.94" y="232" width="0.95" height="68" fill="#de9431" opacity="0.41"/><rect x="683.94" y="421" width="0.95" height="47" fill="#dc922f" opacity="0.63"/><rect x="684.91" y="416" width="0.95" height="32" fill="#9e5f17" opacity="0.38"/><rect x="685.88" y="232" width="0.95" height="33" fill="#de9431" opacity="0.40"/><rect x="685.88" y="296" width="0.95" height="172" fill="#dc922f" opacity="0.60"/><rect x="687.82" y="232" width="0.95" height="93" fill="#de9431" opacity="0.33"/><rect x="687.82" y="394" width="0.95" height="74" fill="#dc922f" opacity="0.57"/><rect x="689.76" y="232" width="0.95" height="90" fill="#de9431" opacity="0.58"/><rect x="689.76" y="361" width="0.95" height="107" fill="#dc922f" opacity="0.60"/><rect x="690.73" y="365" width="0.95" height="85" fill="#9e5f17" opacity="0.55"/><rect x="691.70" y="232" width="0.95" height="44" fill="#de9431" opacity="0.35"/><rect x="691.70" y="390" width="0.95" height="78" fill="#dc922f" opacity="0.31"/><rect x="693.64" y="232" width="0.95" height="30" fill="#de9431" opacity="0.22"/><rect x="693.64" y="405" width="0.95" height="63" fill="#dc922f" opacity="0.36"/><rect x="694.61" y="308" width="0.95" height="107" fill="#9e5f17" opacity="0.27"/><rect x="695.58" y="232" width="0.95" height="66" fill="#de9431" opacity="0.55"/><rect x="695.58" y="413" width="0.95" height="55" fill="#dc922f" opacity="0.69"/><rect x="696.55" y="312" width="0.95" height="56" fill="#9e5f17" opacity="0.52"/><rect x="697.52" y="232" width="0.95" height="33" fill="#de9431" opacity="0.27"/><rect x="697.52" y="325" width="0.95" height="143" fill="#dc922f" opacity="0.41"/><rect x="699.46" y="232" width="0.95" height="42" fill="#de9431" opacity="0.20"/><rect x="699.46" y="353" width="0.95" height="115" fill="#dc922f" opacity="0.47"/><rect x="701.40" y="232" width="0.95" height="77" fill="#de9431" opacity="0.41"/><rect x="701.40" y="383" width="0.95" height="85" fill="#dc922f" opacity="0.60"/><rect x="702.37" y="402" width="0.95" height="98" fill="#9e5f17" opacity="0.51"/><rect x="703.34" y="232" width="0.95" height="53" fill="#de9431" opacity="0.36"/><rect x="703.34" y="306" width="0.95" height="162" fill="#dc922f" opacity="0.59"/><rect x="704.31" y="248" width="0.95" height="41" fill="#9e5f17" opacity="0.30"/><rect x="705.28" y="232" width="0.95" height="24" fill="#de9431" opacity="0.20"/><rect x="705.28" y="313" width="0.95" height="155" fill="#dc922f" opacity="0.35"/><rect x="705.28" y="406" width="1.1" height="41" fill="#eda43a" opacity="0.8"/><rect x="707.22" y="232" width="0.95" height="32" fill="#de9431" opacity="0.30"/><rect x="707.22" y="342" width="0.95" height="126" fill="#dc922f" opacity="0.46"/><rect x="708.19" y="392" width="0.95" height="119" fill="#9e5f17" opacity="0.39"/><rect x="709.16" y="232" width="0.95" height="27" fill="#de9431" opacity="0.24"/><rect x="709.16" y="341" width="0.95" height="127" fill="#dc922f" opacity="0.42"/><rect x="711.10" y="232" width="0.95" height="22" fill="#de9431" opacity="0.58"/><rect x="711.10" y="369" width="0.95" height="99" fill="#dc922f" opacity="0.37"/><rect x="711.10" y="340" width="1.1" height="59" fill="#eda43a" opacity="0.8"/><rect x="713.04" y="232" width="0.95" height="92" fill="#de9431" opacity="0.48"/><rect x="713.04" y="329" width="0.95" height="139" fill="#dc922f" opacity="0.47"/><rect x="714.01" y="378" width="0.95" height="73" fill="#9e5f17" opacity="0.48"/><rect x="714.98" y="232" width="0.95" height="39" fill="#de9431" opacity="0.52"/><rect x="714.98" y="438" width="0.95" height="30" fill="#dc922f" opacity="0.68"/><rect x="716.92" y="232" width="0.95" height="81" fill="#de9431" opacity="0.29"/><rect x="716.92" y="368" width="0.95" height="100" fill="#dc922f" opacity="0.46"/><rect x="717.89" y="241" width="0.95" height="48" fill="#9e5f17" opacity="0.33"/><rect x="718.86" y="232" width="0.95" height="99" fill="#de9431" opacity="0.38"/><rect x="718.86" y="431" width="0.95" height="37" fill="#dc922f" opacity="0.74"/><rect x="720.80" y="232" width="0.95" height="38" fill="#de9431" opacity="0.29"/><rect x="720.80" y="320" width="0.95" height="148" fill="#dc922f" opacity="0.39"/><rect x="722.74" y="232" width="0.95" height="90" fill="#de9431" opacity="0.39"/><rect x="722.74" y="388" width="0.95" height="80" fill="#dc922f" opacity="0.66"/><rect x="723.71" y="358" width="0.95" height="111" fill="#9e5f17" opacity="0.48"/><rect x="724.68" y="232" width="0.95" height="60" fill="#de9431" opacity="0.27"/><rect x="724.68" y="408" width="0.95" height="60" fill="#dc922f" opacity="0.45"/><rect x="726.62" y="232" width="0.95" height="53" fill="#de9431" opacity="0.36"/><rect x="726.62" y="432" width="0.95" height="36" fill="#dc922f" opacity="0.63"/><rect x="727.59" y="259" width="0.95" height="35" fill="#9e5f17" opacity="0.52"/><rect x="728.56" y="232" width="0.95" height="32" fill="#de9431" opacity="0.53"/><rect x="728.56" y="437" width="0.95" height="31" fill="#dc922f" opacity="0.60"/><rect x="730.50" y="232" width="0.95" height="31" fill="#de9431" opacity="0.21"/><rect x="730.50" y="436" width="0.95" height="32" fill="#dc922f" opacity="0.59"/><rect x="732.44" y="232" width="0.95" height="56" fill="#de9431" opacity="0.55"/><rect x="732.44" y="414" width="0.95" height="54" fill="#dc922f" opacity="0.39"/><rect x="733.41" y="290" width="0.95" height="44" fill="#9e5f17" opacity="0.43"/><rect x="734.38" y="232" width="0.95" height="55" fill="#de9431" opacity="0.25"/><rect x="734.38" y="427" width="0.95" height="41" fill="#dc922f" opacity="0.46"/><rect x="736.32" y="232" width="0.95" height="95" fill="#de9431" opacity="0.37"/><rect x="736.32" y="428" width="0.95" height="40" fill="#dc922f" opacity="0.53"/><rect x="738.26" y="232" width="0.95" height="22" fill="#de9431" opacity="0.38"/><rect x="738.26" y="317" width="0.95" height="151" fill="#dc922f" opacity="0.30"/><rect x="740.20" y="232" width="0.95" height="59" fill="#de9431" opacity="0.49"/><rect x="740.20" y="373" width="0.95" height="95" fill="#dc922f" opacity="0.45"/><rect x="742.14" y="232" width="0.95" height="85" fill="#de9431" opacity="0.24"/><rect x="742.14" y="374" width="0.95" height="94" fill="#dc922f" opacity="0.41"/><rect x="743.11" y="378" width="0.95" height="71" fill="#9e5f17" opacity="0.42"/><rect x="744.08" y="232" width="0.95" height="96" fill="#de9431" opacity="0.38"/><rect x="744.08" y="382" width="0.95" height="86" fill="#dc922f" opacity="0.53"/><rect x="746.02" y="232" width="0.95" height="58" fill="#de9431" opacity="0.41"/><rect x="746.02" y="362" width="0.95" height="106" fill="#dc922f" opacity="0.72"/><rect x="747.96" y="232" width="0.95" height="98" fill="#de9431" opacity="0.30"/><rect x="747.96" y="374" width="0.95" height="94" fill="#dc922f" opacity="0.72"/><rect x="749.90" y="232" width="0.95" height="30" fill="#de9431" opacity="0.38"/><rect x="749.90" y="301" width="0.95" height="167" fill="#dc922f" opacity="0.41"/><rect x="750.87" y="359" width="0.95" height="98" fill="#9e5f17" opacity="0.52"/><rect x="751.84" y="232" width="0.95" height="79" fill="#de9431" opacity="0.46"/><rect x="751.84" y="311" width="0.95" height="157" fill="#dc922f" opacity="0.70"/><rect x="753.78" y="232" width="0.95" height="99" fill="#de9431" opacity="0.36"/><rect x="753.78" y="363" width="0.95" height="105" fill="#dc922f" opacity="0.75"/><rect x="755.72" y="232" width="0.95" height="56" fill="#de9431" opacity="0.41"/><rect x="755.72" y="341" width="0.95" height="127" fill="#dc922f" opacity="0.39"/><rect x="757.66" y="232" width="0.95" height="22" fill="#de9431" opacity="0.42"/><rect x="757.66" y="356" width="0.95" height="112" fill="#dc922f" opacity="0.31"/><rect x="759.60" y="232" width="0.95" height="63" fill="#de9431" opacity="0.23"/><rect x="759.60" y="438" width="0.95" height="30" fill="#dc922f" opacity="0.65"/><rect x="761.54" y="232" width="0.95" height="42" fill="#de9431" opacity="0.22"/><rect x="761.54" y="407" width="0.95" height="61" fill="#dc922f" opacity="0.42"/><rect x="762.51" y="314" width="0.95" height="111" fill="#9e5f17" opacity="0.50"/><rect x="763.48" y="232" width="0.95" height="32" fill="#de9431" opacity="0.57"/><rect x="763.48" y="376" width="0.95" height="92" fill="#dc922f" opacity="0.62"/><rect x="764.45" y="247" width="0.95" height="89" fill="#9e5f17" opacity="0.38"/><rect x="763.48" y="418" width="1.1" height="42" fill="#eda43a" opacity="0.8"/><rect x="765.42" y="232" width="0.95" height="87" fill="#de9431" opacity="0.23"/><rect x="765.42" y="418" width="0.95" height="50" fill="#dc922f" opacity="0.33"/><rect x="767.36" y="232" width="0.95" height="48" fill="#de9431" opacity="0.42"/><rect x="767.36" y="429" width="0.95" height="39" fill="#dc922f" opacity="0.42"/><rect x="768.33" y="333" width="0.95" height="44" fill="#9e5f17" opacity="0.28"/><rect x="769.30" y="232" width="0.95" height="24" fill="#de9431" opacity="0.28"/><rect x="769.30" y="337" width="0.95" height="131" fill="#dc922f" opacity="0.44"/><rect x="771.24" y="232" width="0.95" height="62" fill="#de9431" opacity="0.27"/><rect x="771.24" y="342" width="0.95" height="126" fill="#dc922f" opacity="0.31"/><rect x="772.21" y="239" width="0.95" height="93" fill="#9e5f17" opacity="0.42"/><rect x="773.18" y="232" width="0.95" height="59" fill="#de9431" opacity="0.57"/><rect x="773.18" y="306" width="0.95" height="162" fill="#dc922f" opacity="0.67"/><rect x="775.12" y="232" width="0.95" height="89" fill="#de9431" opacity="0.36"/><rect x="775.12" y="366" width="0.95" height="102" fill="#dc922f" opacity="0.61"/><rect x="777.06" y="232" width="0.95" height="89" fill="#de9431" opacity="0.48"/><rect x="777.06" y="385" width="0.95" height="83" fill="#dc922f" opacity="0.48"/><rect x="777.06" y="265" width="1.1" height="14" fill="#eda43a" opacity="0.8"/><rect x="779.00" y="232" width="0.95" height="81" fill="#de9431" opacity="0.30"/><rect x="779.00" y="314" width="0.95" height="154" fill="#dc922f" opacity="0.34"/><rect x="780.94" y="232" width="0.95" height="76" fill="#de9431" opacity="0.31"/><rect x="780.94" y="326" width="0.95" height="142" fill="#dc922f" opacity="0.43"/><rect x="782.88" y="232" width="0.95" height="57" fill="#de9431" opacity="0.31"/><rect x="782.88" y="434" width="0.95" height="34" fill="#dc922f" opacity="0.74"/><rect x="784.82" y="232" width="0.95" height="100" fill="#de9431" opacity="0.32"/><rect x="784.82" y="343" width="0.95" height="125" fill="#dc922f" opacity="0.30"/><rect x="786.76" y="232" width="0.95" height="62" fill="#de9431" opacity="0.28"/><rect x="786.76" y="366" width="0.95" height="102" fill="#dc922f" opacity="0.30"/><rect x="787.73" y="253" width="0.95" height="60" fill="#9e5f17" opacity="0.26"/><rect x="786.76" y="298" width="1.1" height="22" fill="#eda43a" opacity="0.8"/><rect x="788.70" y="232" width="0.95" height="69" fill="#de9431" opacity="0.41"/><rect x="788.70" y="403" width="0.95" height="65" fill="#dc922f" opacity="0.60"/><rect x="790.64" y="232" width="0.95" height="52" fill="#de9431" opacity="0.33"/><rect x="790.64" y="438" width="0.95" height="30" fill="#dc922f" opacity="0.37"/><rect x="792.58" y="232" width="0.95" height="24" fill="#de9431" opacity="0.53"/><rect x="792.58" y="424" width="0.95" height="44" fill="#dc922f" opacity="0.58"/><rect x="794.52" y="232" width="0.95" height="32" fill="#de9431" opacity="0.41"/><rect x="794.52" y="366" width="0.95" height="102" fill="#dc922f" opacity="0.68"/><rect x="796.46" y="232" width="0.95" height="68" fill="#de9431" opacity="0.56"/><rect x="796.46" y="392" width="0.95" height="76" fill="#dc922f" opacity="0.61"/><rect x="797.43" y="242" width="0.95" height="33" fill="#9e5f17" opacity="0.36"/><rect x="798.40" y="232" width="0.95" height="89" fill="#de9431" opacity="0.42"/><rect x="798.40" y="384" width="0.95" height="84" fill="#dc922f" opacity="0.58"/><rect x="800.34" y="232" width="0.95" height="20" fill="#de9431" opacity="0.52"/><rect x="800.34" y="402" width="0.95" height="66" fill="#dc922f" opacity="0.53"/><rect x="802.28" y="232" width="0.95" height="25" fill="#de9431" opacity="0.49"/><rect x="802.28" y="328" width="0.95" height="140" fill="#dc922f" opacity="0.33"/><rect x="803.25" y="370" width="0.95" height="41" fill="#9e5f17" opacity="0.47"/><rect x="804.22" y="232" width="0.95" height="61" fill="#de9431" opacity="0.35"/><rect x="804.22" y="362" width="0.95" height="106" fill="#dc922f" opacity="0.61"/><rect x="806.16" y="232" width="0.95" height="73" fill="#de9431" opacity="0.23"/><rect x="806.16" y="312" width="0.95" height="156" fill="#dc922f" opacity="0.41"/><rect x="808.10" y="232" width="0.95" height="67" fill="#de9431" opacity="0.20"/><rect x="808.10" y="299" width="0.95" height="169" fill="#dc922f" opacity="0.42"/><rect x="810.04" y="232" width="0.95" height="76" fill="#de9431" opacity="0.32"/><rect x="810.04" y="367" width="0.95" height="101" fill="#dc922f" opacity="0.51"/><rect x="811.98" y="232" width="0.95" height="94" fill="#de9431" opacity="0.28"/><rect x="811.98" y="437" width="0.95" height="31" fill="#dc922f" opacity="0.72"/><rect x="812.95" y="320" width="0.95" height="102" fill="#9e5f17" opacity="0.54"/><rect x="813.92" y="232" width="0.95" height="42" fill="#de9431" opacity="0.28"/><rect x="813.92" y="432" width="0.95" height="36" fill="#dc922f" opacity="0.39"/><rect x="815.86" y="232" width="0.95" height="63" fill="#de9431" opacity="0.58"/><rect x="815.86" y="310" width="0.95" height="158" fill="#dc922f" opacity="0.67"/><rect x="817.80" y="232" width="0.95" height="78" fill="#de9431" opacity="0.29"/><rect x="817.80" y="425" width="0.95" height="43" fill="#dc922f" opacity="0.52"/><rect x="818.77" y="237" width="0.95" height="69" fill="#9e5f17" opacity="0.39"/><rect x="819.74" y="232" width="0.95" height="32" fill="#de9431" opacity="0.34"/><rect x="819.74" y="337" width="0.95" height="131" fill="#dc922f" opacity="0.68"/><rect x="820.71" y="374" width="0.95" height="104" fill="#9e5f17" opacity="0.29"/><rect x="821.68" y="232" width="0.95" height="79" fill="#de9431" opacity="0.56"/><rect x="821.68" y="333" width="0.95" height="135" fill="#dc922f" opacity="0.47"/><rect x="823.62" y="232" width="0.95" height="69" fill="#de9431" opacity="0.34"/><rect x="823.62" y="354" width="0.95" height="114" fill="#dc922f" opacity="0.42"/><rect x="824.59" y="255" width="0.95" height="103" fill="#9e5f17" opacity="0.34"/><rect x="825.56" y="232" width="0.95" height="41" fill="#de9431" opacity="0.31"/><rect x="825.56" y="367" width="0.95" height="101" fill="#dc922f" opacity="0.39"/><rect x="827.50" y="232" width="0.95" height="93" fill="#de9431" opacity="0.52"/><rect x="827.50" y="385" width="0.95" height="83" fill="#dc922f" opacity="0.71"/><rect x="829.44" y="232" width="0.95" height="80" fill="#de9431" opacity="0.22"/><rect x="829.44" y="400" width="0.95" height="68" fill="#dc922f" opacity="0.50"/><rect x="831.38" y="232" width="0.95" height="44" fill="#de9431" opacity="0.22"/><rect x="831.38" y="429" width="0.95" height="39" fill="#dc922f" opacity="0.36"/><rect x="833.32" y="232" width="0.95" height="45" fill="#de9431" opacity="0.50"/><rect x="833.32" y="436" width="0.95" height="32" fill="#dc922f" opacity="0.42"/><rect x="835.26" y="232" width="0.95" height="66" fill="#de9431" opacity="0.36"/><rect x="835.26" y="315" width="0.95" height="153" fill="#dc922f" opacity="0.37"/><rect x="836.23" y="403" width="0.95" height="70" fill="#9e5f17" opacity="0.32"/><rect x="837.20" y="232" width="0.95" height="103" fill="#de9431" opacity="0.38"/><rect x="837.20" y="311" width="0.95" height="157" fill="#dc922f" opacity="0.39"/><rect x="838.17" y="299" width="0.95" height="29" fill="#9e5f17" opacity="0.32"/><rect x="839.14" y="232" width="0.95" height="67" fill="#de9431" opacity="0.55"/><rect x="839.14" y="402" width="0.95" height="66" fill="#dc922f" opacity="0.49"/><rect x="841.08" y="232" width="0.95" height="51" fill="#de9431" opacity="0.34"/><rect x="841.08" y="299" width="0.95" height="169" fill="#dc922f" opacity="0.42"/><rect x="843.02" y="232" width="0.95" height="62" fill="#de9431" opacity="0.45"/><rect x="843.02" y="419" width="0.95" height="49" fill="#dc922f" opacity="0.40"/><rect x="843.99" y="282" width="0.95" height="60" fill="#9e5f17" opacity="0.38"/><rect x="844.96" y="232" width="0.95" height="90" fill="#de9431" opacity="0.55"/><rect x="844.96" y="293" width="0.95" height="175" fill="#dc922f" opacity="0.31"/><rect x="846.90" y="232" width="0.95" height="59" fill="#de9431" opacity="0.43"/><rect x="846.90" y="290" width="0.95" height="178" fill="#dc922f" opacity="0.48"/><rect x="848.84" y="232" width="0.95" height="91" fill="#de9431" opacity="0.59"/><rect x="848.84" y="327" width="0.95" height="141" fill="#dc922f" opacity="0.35"/><rect x="849.81" y="332" width="0.95" height="88" fill="#9e5f17" opacity="0.53"/><rect x="850.78" y="232" width="0.95" height="74" fill="#de9431" opacity="0.51"/><rect x="850.78" y="359" width="0.95" height="109" fill="#dc922f" opacity="0.55"/><rect x="851.75" y="380" width="0.95" height="43" fill="#9e5f17" opacity="0.53"/><rect x="852.72" y="232" width="0.95" height="45" fill="#de9431" opacity="0.25"/><rect x="852.72" y="328" width="0.95" height="140" fill="#dc922f" opacity="0.59"/><rect x="854.66" y="232" width="0.95" height="26" fill="#de9431" opacity="0.41"/><rect x="854.66" y="377" width="0.95" height="91" fill="#dc922f" opacity="0.47"/><rect x="855.63" y="347" width="0.95" height="21" fill="#9e5f17" opacity="0.34"/><rect x="856.60" y="232" width="0.95" height="100" fill="#de9431" opacity="0.46"/><rect x="856.60" y="423" width="0.95" height="45" fill="#dc922f" opacity="0.51"/><rect x="857.57" y="281" width="0.95" height="116" fill="#9e5f17" opacity="0.46"/><rect x="858.54" y="232" width="0.95" height="22" fill="#de9431" opacity="0.40"/><rect x="858.54" y="391" width="0.95" height="77" fill="#dc922f" opacity="0.49"/><rect x="859.51" y="359" width="0.95" height="113" fill="#9e5f17" opacity="0.32"/><rect x="858.54" y="304" width="1.1" height="31" fill="#eda43a" opacity="0.8"/><rect x="860.48" y="232" width="0.95" height="77" fill="#de9431" opacity="0.28"/><rect x="860.48" y="410" width="0.95" height="58" fill="#dc922f" opacity="0.63"/><rect x="862.42" y="232" width="0.95" height="100" fill="#de9431" opacity="0.32"/><rect x="862.42" y="413" width="0.95" height="55" fill="#dc922f" opacity="0.40"/><rect x="863.39" y="376" width="0.95" height="49" fill="#9e5f17" opacity="0.54"/><rect x="864.36" y="232" width="0.95" height="36" fill="#de9431" opacity="0.29"/><rect x="864.36" y="353" width="0.95" height="115" fill="#dc922f" opacity="0.60"/><rect x="866.30" y="232" width="0.95" height="53" fill="#de9431" opacity="0.29"/><rect x="866.30" y="436" width="0.95" height="32" fill="#dc922f" opacity="0.36"/><rect x="867.27" y="247" width="0.95" height="59" fill="#9e5f17" opacity="0.52"/><rect x="868.24" y="232" width="0.95" height="81" fill="#de9431" opacity="0.60"/><rect x="868.24" y="430" width="0.95" height="38" fill="#dc922f" opacity="0.45"/><rect x="869.21" y="408" width="0.95" height="95" fill="#9e5f17" opacity="0.26"/><rect x="870.18" y="232" width="0.95" height="51" fill="#de9431" opacity="0.35"/><rect x="870.18" y="340" width="0.95" height="128" fill="#dc922f" opacity="0.38"/><rect x="871.15" y="287" width="0.95" height="55" fill="#9e5f17" opacity="0.54"/><rect x="872.12" y="232" width="0.95" height="100" fill="#de9431" opacity="0.28"/><rect x="872.12" y="343" width="0.95" height="125" fill="#dc922f" opacity="0.67"/><rect x="874.06" y="232" width="0.95" height="24" fill="#de9431" opacity="0.39"/><rect x="874.06" y="346" width="0.95" height="122" fill="#dc922f" opacity="0.71"/><rect x="875.03" y="303" width="0.95" height="110" fill="#9e5f17" opacity="0.26"/><rect x="876.00" y="232" width="0.95" height="87" fill="#de9431" opacity="0.51"/><rect x="876.00" y="296" width="0.95" height="172" fill="#dc922f" opacity="0.32"/><rect x="876.97" y="405" width="0.95" height="46" fill="#9e5f17" opacity="0.47"/><rect x="877.94" y="232" width="0.95" height="48" fill="#de9431" opacity="0.31"/><rect x="877.94" y="434" width="0.95" height="34" fill="#dc922f" opacity="0.58"/><rect x="878.91" y="368" width="0.95" height="52" fill="#9e5f17" opacity="0.33"/><rect x="877.94" y="384" width="1.1" height="56" fill="#eda43a" opacity="0.8"/><rect x="879.88" y="232" width="0.95" height="73" fill="#de9431" opacity="0.58"/><rect x="879.88" y="294" width="0.95" height="174" fill="#dc922f" opacity="0.41"/><rect x="881.82" y="232" width="0.95" height="99" fill="#de9431" opacity="0.35"/><rect x="881.82" y="328" width="0.95" height="140" fill="#dc922f" opacity="0.49"/><rect x="883.76" y="232" width="0.95" height="35" fill="#de9431" opacity="0.52"/><rect x="883.76" y="401" width="0.95" height="67" fill="#dc922f" opacity="0.67"/><rect x="885.70" y="232" width="0.95" height="47" fill="#de9431" opacity="0.33"/><rect x="885.70" y="344" width="0.95" height="124" fill="#dc922f" opacity="0.65"/><rect x="886.67" y="272" width="0.95" height="95" fill="#9e5f17" opacity="0.32"/><rect x="885.70" y="246" width="1.1" height="38" fill="#eda43a" opacity="0.8"/><rect x="887.64" y="232" width="0.95" height="47" fill="#de9431" opacity="0.59"/><rect x="887.64" y="423" width="0.95" height="45" fill="#dc922f" opacity="0.74"/><rect x="888.61" y="251" width="0.95" height="30" fill="#9e5f17" opacity="0.40"/><rect x="889.58" y="232" width="0.95" height="57" fill="#de9431" opacity="0.29"/><rect x="889.58" y="353" width="0.95" height="115" fill="#dc922f" opacity="0.58"/><rect x="891.52" y="232" width="0.95" height="90" fill="#de9431" opacity="0.47"/><rect x="891.52" y="308" width="0.95" height="160" fill="#dc922f" opacity="0.68"/><rect x="892.49" y="340" width="0.95" height="57" fill="#9e5f17" opacity="0.47"/><rect x="893.46" y="232" width="0.95" height="41" fill="#de9431" opacity="0.30"/><rect x="893.46" y="313" width="0.95" height="155" fill="#dc922f" opacity="0.70"/><rect x="895.40" y="232" width="0.95" height="53" fill="#de9431" opacity="0.60"/><rect x="895.40" y="366" width="0.95" height="102" fill="#dc922f" opacity="0.40"/><rect x="897.34" y="232" width="0.95" height="102" fill="#de9431" opacity="0.24"/><rect x="897.34" y="361" width="0.95" height="107" fill="#dc922f" opacity="0.67"/><rect x="899.28" y="232" width="0.95" height="23" fill="#de9431" opacity="0.32"/><rect x="899.28" y="308" width="0.95" height="160" fill="#dc922f" opacity="0.39"/><rect x="901.22" y="232" width="0.95" height="97" fill="#de9431" opacity="0.35"/><rect x="901.22" y="420" width="0.95" height="48" fill="#dc922f" opacity="0.50"/><rect x="902.19" y="379" width="0.95" height="115" fill="#9e5f17" opacity="0.28"/><rect x="903.16" y="232" width="0.95" height="71" fill="#de9431" opacity="0.29"/><rect x="903.16" y="345" width="0.95" height="123" fill="#dc922f" opacity="0.36"/><rect x="904.13" y="283" width="0.95" height="80" fill="#9e5f17" opacity="0.45"/><rect x="905.10" y="232" width="0.95" height="21" fill="#de9431" opacity="0.33"/><rect x="905.10" y="392" width="0.95" height="76" fill="#dc922f" opacity="0.38"/><rect x="907.04" y="232" width="0.95" height="86" fill="#de9431" opacity="0.42"/><rect x="907.04" y="299" width="0.95" height="169" fill="#dc922f" opacity="0.35"/><rect x="908.98" y="232" width="0.95" height="73" fill="#de9431" opacity="0.24"/><rect x="908.98" y="315" width="0.95" height="153" fill="#dc922f" opacity="0.61"/><rect x="910.92" y="232" width="0.95" height="46" fill="#de9431" opacity="0.58"/><rect x="910.92" y="337" width="0.95" height="131" fill="#dc922f" opacity="0.55"/><rect x="912.86" y="232" width="0.95" height="92" fill="#de9431" opacity="0.60"/><rect x="912.86" y="345" width="0.95" height="123" fill="#dc922f" opacity="0.39"/><rect x="914.80" y="232" width="0.95" height="20" fill="#de9431" opacity="0.56"/><rect x="914.80" y="354" width="0.95" height="114" fill="#dc922f" opacity="0.67"/><rect x="916.74" y="232" width="0.95" height="58" fill="#de9431" opacity="0.27"/><rect x="916.74" y="292" width="0.95" height="176" fill="#dc922f" opacity="0.55"/><rect x="918.68" y="232" width="0.95" height="27" fill="#de9431" opacity="0.45"/><rect x="918.68" y="346" width="0.95" height="122" fill="#dc922f" opacity="0.53"/><rect x="919.65" y="288" width="0.95" height="72" fill="#9e5f17" opacity="0.53"/><rect x="920.62" y="232" width="0.95" height="61" fill="#de9431" opacity="0.52"/><rect x="920.62" y="435" width="0.95" height="33" fill="#dc922f" opacity="0.39"/><rect x="921.59" y="410" width="0.95" height="118" fill="#9e5f17" opacity="0.39"/><rect x="920.62" y="416" width="1.1" height="29" fill="#eda43a" opacity="0.8"/><rect x="922.56" y="232" width="0.95" height="95" fill="#de9431" opacity="0.45"/><rect x="922.56" y="414" width="0.95" height="54" fill="#dc922f" opacity="0.37"/><rect x="924.50" y="232" width="0.95" height="54" fill="#de9431" opacity="0.54"/><rect x="924.50" y="414" width="0.95" height="54" fill="#dc922f" opacity="0.38"/><rect x="925.47" y="310" width="0.95" height="72" fill="#9e5f17" opacity="0.37"/><rect x="926.44" y="232" width="0.95" height="41" fill="#de9431" opacity="0.49"/><rect x="926.44" y="425" width="0.95" height="43" fill="#dc922f" opacity="0.32"/><rect x="928.38" y="232" width="0.95" height="23" fill="#de9431" opacity="0.54"/><rect x="928.38" y="308" width="0.95" height="160" fill="#dc922f" opacity="0.57"/><rect x="930.32" y="232" width="0.95" height="45" fill="#de9431" opacity="0.37"/><rect x="930.32" y="377" width="0.95" height="91" fill="#dc922f" opacity="0.49"/><rect x="932.26" y="232" width="0.95" height="56" fill="#de9431" opacity="0.21"/><rect x="932.26" y="383" width="0.95" height="85" fill="#dc922f" opacity="0.52"/><rect x="933.23" y="376" width="0.95" height="98" fill="#9e5f17" opacity="0.39"/><rect x="934.20" y="232" width="0.95" height="59" fill="#de9431" opacity="0.24"/><rect x="934.20" y="309" width="0.95" height="159" fill="#dc922f" opacity="0.49"/><rect x="935.17" y="317" width="0.95" height="71" fill="#9e5f17" opacity="0.26"/><rect x="936.14" y="232" width="0.95" height="27" fill="#de9431" opacity="0.49"/><rect x="936.14" y="407" width="0.95" height="61" fill="#dc922f" opacity="0.53"/><rect x="937.11" y="329" width="0.95" height="58" fill="#9e5f17" opacity="0.54"/><rect x="938.08" y="232" width="0.95" height="91" fill="#de9431" opacity="0.60"/><rect x="938.08" y="400" width="0.95" height="68" fill="#dc922f" opacity="0.67"/><rect x="939.05" y="417" width="0.95" height="69" fill="#9e5f17" opacity="0.54"/><rect x="940.02" y="232" width="0.95" height="34" fill="#de9431" opacity="0.52"/><rect x="940.02" y="430" width="0.95" height="38" fill="#dc922f" opacity="0.33"/><rect x="941.96" y="232" width="0.95" height="33" fill="#de9431" opacity="0.56"/><rect x="941.96" y="331" width="0.95" height="137" fill="#dc922f" opacity="0.67"/><rect x="942.93" y="328" width="0.95" height="112" fill="#9e5f17" opacity="0.31"/><rect x="943.90" y="232" width="0.95" height="62" fill="#de9431" opacity="0.33"/><rect x="943.90" y="296" width="0.95" height="172" fill="#dc922f" opacity="0.38"/><rect x="944.87" y="408" width="0.95" height="88" fill="#9e5f17" opacity="0.52"/><rect x="945.84" y="232" width="0.95" height="85" fill="#de9431" opacity="0.25"/><rect x="945.84" y="370" width="0.95" height="98" fill="#dc922f" opacity="0.59"/><rect x="947.78" y="232" width="0.95" height="66" fill="#de9431" opacity="0.43"/><rect x="947.78" y="422" width="0.95" height="46" fill="#dc922f" opacity="0.35"/>
<rect x="672" y="232" width="2.5" height="210" fill="#eb9b33" opacity="0.9"/>
<rect x="675.5" y="240" width="1.2" height="200" fill="#e5972f" opacity="0.8"/>
<rect x="944.5" y="234" width="4" height="190" fill="#d68a2a" opacity="0.8"/>
<rect x="672" y="232" width="277" height="2.2" fill="#d98d2c" opacity="0.9"/>
<rect x="892" y="233" width="1.2" height="30" fill="#b06a1c" opacity="0.7"/>
<rect x="939.5" y="256" width="1.5" height="12" fill="#8a5a28" opacity="0.8"/>
</g></svg>
<svg style="left:794px;top:410px;overflow:visible" width="41" height="45" viewBox="0 0 41 45"><g fill="none"><path d="M20.4 -1.5 V15.5 M20.4 25.5 V43 M1 20.5 H15.4 M25.4 20.5 H40" stroke="#0c0c0c" stroke-width="1.05"/>
<circle cx="20.4" cy="20.5" r="11" stroke="#fff" stroke-width="1.4"/><circle cx="20.4" cy="20.5" r="11" stroke="#e2402a" stroke-width="1.4" stroke-dasharray="4.32 4.32" stroke-dashoffset="2"/></g><circle cx="20.4" cy="20.5" r="2.7" fill="#f39a2c" stroke="#5a2d0a" stroke-width="0.7"/></svg>
<div class="" style="left:0px;top:58px;width:122px;height:28px;background:#353535;border-radius:0 0 6px 0;opacity:.9"></div>
<div class="blue" style="left:7px;top:62px;width:21px;height:20px;border-radius:3px 0 0 3px"></div>
<svg style="left:7px;top:62px;" width="21" height="20" viewBox="0 0 21 20"><rect x="2.5" y="2.5" width="16" height="15" fill="none" stroke="#fff" stroke-width="1.5" stroke-dasharray="2.6 2"/></svg>
<div class="gray" style="left:29px;top:62px;width:20px;height:20px;"></div>
<svg style="left:29px;top:62px;" width="20" height="20" viewBox="0 0 20 20"><rect x="7.5" y="2.5" width="10.5" height="10" fill="#d2d2d2"/><rect x="2" y="7.5" width="10.5" height="10" fill="#d2d2d2"/></svg>
<div class="gray" style="left:51px;top:62px;width:20px;height:20px;"></div>
<svg style="left:51px;top:62px;" width="20" height="20" viewBox="0 0 20 20"><rect x="7.5" y="2.5" width="10.5" height="10" fill="#dcdcdc"/><rect x="2.5" y="7.5" width="10" height="10" fill="#545454" stroke="#c4c4c4" stroke-width="1.1" stroke-dasharray="2 1.6"/></svg>
<div class="gray" style="left:73px;top:62px;width:19px;height:20px;"></div>
<svg style="left:73px;top:62px;" width="20" height="20" viewBox="0 0 20 20"><rect x="6.5" y="2.5" width="10.5" height="10" fill="#dcdcdc"/><rect x="2" y="7" width="10.5" height="10" fill="#dcdcdc"/><rect x="6.8" y="7.3" width="5.4" height="5" fill="#3a3a3a"/></svg>
<div class="gray" style="left:94px;top:62px;width:21px;height:20px;border-radius:0 3px 3px 0"></div>
<svg style="left:94px;top:62px;" width="21" height="20" viewBox="0 0 21 20"><rect x="3" y="3" width="15" height="14" fill="none" stroke="#bdbdbd" stroke-width="1.1" stroke-dasharray="2 1.8"/><rect x="7" y="7" width="7" height="6" fill="#dcdcdc"/></svg>
<div class="" style="left:1506px;top:58px;width:91px;height:28px;background:#353535;border-radius:0 0 0 6px;opacity:.9"></div>
<div class="btn" style="left:1516px;top:62px;width:71px;height:20px;"></div>
<span class="t " style="left:1524px;top:64.5px;">Options</span>
<svg style="left:1574px;top:67px" width="12" height="12" viewBox="-6 -6 12 12"><path d="M-3.5 -1.75 L0 1.75 L3.5 -1.75" fill="none" stroke="#ddd" stroke-width="1.4" stroke-linecap="round" stroke-linejoin="round"/></svg>
<span class="t " style="left:72px;top:97.5px;color:#f0f0f0">User Perspective</span>
<span class="t " style="left:72px;top:117.5px;color:#f0f0f0">(1) Collection | Grid</span>
<div class="" style="left:0px;top:86px;width:4.5px;height:384.5px;background:#393939"></div>
<div class="" style="left:7px;top:97px;width:44px;height:38px;background:#4772b3;border-radius:5px 5px 0 0"></div>
<div class="" style="left:7px;top:136px;width:44px;height:38px;background:#272727;border-radius:0 0 5px 5px;"></div>
<div class="" style="left:7px;top:182px;width:44px;height:38px;background:#272727;border-radius:5px 5px 0 0;"></div>
<div class="" style="left:7px;top:221px;width:44px;height:38px;background:#272727;border-radius:0;"></div>
<div class="" style="left:7px;top:260.5px;width:44px;height:38.0px;background:#272727;border-radius:0;"></div>
<div class="" style="left:7px;top:300px;width:44px;height:38px;background:#272727;border-radius:0 0 5px 5px;"></div>
<div class="" style="left:7px;top:346px;width:44px;height:38px;background:#272727;border-radius:5px 5px 0 0;"></div>
<div class="" style="left:7px;top:385px;width:44px;height:38px;background:#272727;border-radius:0 0 5px 5px;"></div>
<div class="" style="left:7px;top:431px;width:44px;height:38px;background:#272727;border-radius:5px;"></div>
<svg style="left:44px;top:129px;" width="5" height="5" viewBox="0 0 5 5"><path d="M5 0 V5 H0 Z" fill="#9bb4dc"/></svg>
<svg style="left:44px;top:292px;" width="5" height="5" viewBox="0 0 5 5"><path d="M5 0 V5 H0 Z" fill="#9a9a9a"/></svg>
<svg style="left:44px;top:378px;" width="5" height="5" viewBox="0 0 5 5"><path d="M5 0 V5 H0 Z" fill="#9a9a9a"/></svg>
<svg style="left:44px;top:463px;" width="5" height="5" viewBox="0 0 5 5"><path d="M5 0 V5 H0 Z" fill="#9a9a9a"/></svg>
<svg style="left:15px;top:102px;" width="28" height="28" viewBox="0 0 28 28"><rect x="1.6" y="1.6" width="24.6" height="24" fill="none" stroke="#f0b450" stroke-width="1.5" stroke-dasharray="4.4 2.9"/><path d="M10 7.5 L20 14.5 L15 15.4 L12.5 20.2 Z" fill="#f4f4fa"/></svg>
<svg style="left:14px;top:140.5px;" width="30" height="30" viewBox="0 0 30 30"><g fill="none"><circle cx="14.7" cy="15" r="12.3" stroke="#f2f2f2" stroke-width="1.4"/><circle cx="14.7" cy="15" r="12.3" stroke="#a8343e" stroke-width="1.4" stroke-dasharray="4.83 4.83" stroke-dashoffset="2.4"/><path d="M14.7 6.5 V12.3 M14.7 17.7 V23.5 M6.2 15 H12 M17.4 15 H23.2" stroke="#dcdcdc" stroke-width="1.3"/></g></svg>
<svg style="left:14px;top:186px;" width="30" height="30" viewBox="0 0 30 30"><g fill="#e6e6e6"><path d="M15 1.8 L19.2 7.4 H10.8 Z M15 28.2 L19.2 22.6 H10.8 Z M1.8 15 L7.4 10.8 V19.2 Z M28.2 15 L22.6 10.8 V19.2 Z"/></g><g stroke="#e6e6e6" stroke-width="2"><path d="M15 8.6 V11.6 M15 18.4 V21.4 M8.6 15 H11.6 M18.4 15 H21.4"/></g></svg>
<svg style="left:14px;top:225px;" width="30" height="30" viewBox="0 0 30 30"><g fill="none" stroke="#e6e6e6" stroke-width="1.7"><path d="M5 10 A11.5 11.5 0 0 1 25 10"/><path d="M25.4 19.5 A11.5 11.5 0 0 1 4.6 19.5"/></g><path d="M1.5 12.5 H8.5 L5 17.5 Z M21.5 17.5 H28.5 L25 12.5 Z" fill="#e6e6e6"/><rect x="11.9" y="11.9" width="6.2" height="6.2" transform="rotate(45 15 15)" fill="#b4b4b4"/></svg>
<svg style="left:16.5px;top:267px;" width="25" height="25" viewBox="0 0 30 30"><rect x="4" y="14.5" width="11" height="11" fill="#e6e6e6"/><g fill="none" stroke="#e6e6e6" stroke-width="1.5"><path d="M4 11 V4 H25.5 V25.5 H18.5"/><path d="M15 14.5 L23 6.5 M17.5 6.2 H23.3 V12"/></g></svg>
<svg style="left:14px;top:304px;" width="30" height="30" viewBox="0 0 30 30"><g fill="none" stroke="#e6e6e6" stroke-width="1.6"><path d="M9.5 4.6 A11.5 11.5 0 0 0 4.6 9.5 M20.5 4.6 A11.5 11.5 0 0 1 25.4 9.5 M25.4 20.5 A11.5 11.5 0 0 1 20.5 25.4 M9.5 25.4 A11.5 11.5 0 0 1 4.6 20.5"/></g><g fill="#e6e6e6"><rect x="10.5" y="10.5" width="9" height="9" rx="0.8"/><path d="M15 2 L18.4 6.6 H11.6 Z M15 28 L18.4 23.4 H11.6 Z M2 15 L6.6 11.6 V18.4 Z M28 15 L23.4 11.6 V18.4 Z"/></g></svg>
<svg style="left:14px;top:350px;" width="32" height="30" viewBox="0 0 32 30"><path d="M3.5 19.5 L17 6 L21 10 L7.5 23.5 Z" fill="#f2f2f2"/><path d="M18.2 4.8 L19.8 3.2 A1.6 1.6 0 0 1 22 3.2 L23.8 5 A1.6 1.6 0 0 1 23.8 7.2 L22.2 8.8 Z" fill="#f2f2f2"/><path d="M2.4 21 L6 24.6 L1.2 25.8 Z" fill="#f2f2f2"/><path d="M4 27.5 C10 29.5 13 24 17 22 C21 20 24 21 28 26.5" fill="none" stroke="#8fdcb2" stroke-width="1.5"/></svg>
<svg style="left:14px;top:388px;" width="32" height="32" viewBox="0 0 32 32"><path d="M5.5 2.5 H10 V27 H5.5 Z" fill="#ececec"/><path d="M3.5 27 H28.5 V31 H3.5 Z" fill="#ececec"/><path d="M10 27 V13 A14 14 0 0 1 24 27 Z" fill="#8fdcb2"/><g stroke="#2b2b2b" stroke-width="0.8"><path d="M7.5 5 H10 M7.5 8 H10 M7.5 11 H10 M7.5 14 H10 M7.5 17 H10 M7.5 20 H10 M7.5 23 H10 M7 27 V29 M10 27 V29 M13 27 V29 M16 27 V29 M19 27 V29 M22 27 V29 M25 27 V29"/></g></svg>
<svg style="left:12px;top:433px;" width="34" height="34" viewBox="0 0 34 34"><path d="M6.5 2 V11 M2 6.5 H11" stroke="#6fe6a6" stroke-width="2.2" fill="none"/><g fill="none" stroke="#c8efd8" stroke-width="1.4" stroke-linejoin="round"><path d="M9.5 16 L15.5 10.5 H30 V25.5 L24.5 31 H9.5 Z"/><path d="M9.5 16 H24.5 V31 M24.5 16 L30 10.5"/></g></svg>
<svg style="left:1490px;top:92px;" width="100" height="106" viewBox="0 0 100 106"><g>
<circle cx="18.5" cy="51.5" r="6.6" fill="#4a5a38" stroke="#7aa23a" stroke-width="1.5"/>
<circle cx="67.5" cy="51.5" r="6.6" fill="#5a3a3e" stroke="#b5444f" stroke-width="1.5"/>
<path d="M50 52 V15" stroke="#3b83dc" stroke-width="2.4"/>
<path d="M50 52 H30" stroke="#f03a54" stroke-width="2.4"/>
<path d="M50 52 H80" stroke="#7dc31e" stroke-width="2.4"/>
<circle cx="50" cy="15.5" r="9" fill="#3b83dc"/>
<circle cx="30.5" cy="52" r="9" fill="#f7395a"/>
<circle cx="81" cy="52" r="9" fill="#7dc31e"/>
<circle cx="50" cy="88" r="8" fill="#3d5f8e" stroke="#3b83dc" stroke-width="1.6"/>
<g font-family="Liberation Sans, sans-serif" font-size="11.5" font-weight="bold" text-anchor="middle">
<text x="50" y="19.6" fill="#0e2a55">Z</text><text x="30.5" y="56.1" fill="#5a0a18">X</text><text x="81" y="56.1" fill="#23420a">Y</text></g></g></svg>
<div class="" style="left:1556px;top:190px;width:30px;height:30px;background:#2b2b2b;border-radius:15px"></div>
<div class="" style="left:1556px;top:224px;width:30px;height:30px;background:#2b2b2b;border-radius:15px"></div>
<div class="" style="left:1556px;top:259px;width:30px;height:30px;background:#2b2b2b;border-radius:15px"></div>
<div class="" style="left:1556px;top:293px;width:30px;height:30px;background:#2b2b2b;border-radius:15px"></div>
<svg style="left:1559px;top:193px;" width="24" height="24" viewBox="0 0 24 24"><circle cx="13.8" cy="10.2" r="6.6" fill="#ececec"/><path d="M9 15 L4 20" stroke="#ececec" stroke-width="2.6" stroke-linecap="round"/><path d="M13.8 6.8 V13.6 M10.4 10.2 H17.2" stroke="#2b2b2b" stroke-width="1.5"/></svg>
<svg style="left:1559px;top:227px;" width="24" height="24" viewBox="0 0 24 24"><g stroke="#ececec" stroke-width="2.2" stroke-linecap="round" fill="none"><path d="M8.6 13 L7.2 6.8 M11.2 12 L10.8 4.8 M14 12 L14.8 5 M16.6 13.4 L18.6 7.4"/><path d="M7.6 17.4 L4 13.4" stroke-width="2.4"/></g><path d="M7 11.5 L17.8 11.5 L17.4 15.6 C16.8 19.4 15 21.4 12.2 21.4 C9.2 21.4 7.6 19.6 6.4 16.4 Z" fill="#ececec"/></svg>
<svg style="left:1558px;top:261px;" width="26" height="26" viewBox="0 0 26 26"><g fill="none" stroke="#ececec" stroke-width="1.3"><path d="M7.6 6.2 A3.4 3.4 0 1 0 7.6 13 H16.6 A4.3 4.3 0 1 0 12.6 7.2 C11.6 6.6 10.4 6.2 7.6 6.2 Z"/><rect x="8.6" y="15.2" width="8" height="6.4" rx="0.8"/><path d="M5.6 16 H8.6 M6.6 16 V19.6"/><path d="M22.4 15.6 V21.2 L18.4 18.4 Z"/></g><circle cx="7.6" cy="9.6" r="1.1" fill="#bdbdbd"/><circle cx="16.6" cy="8.6" r="1.6" fill="#a8a8a8"/><rect x="9.4" y="16" width="3.6" height="4.8" fill="#ececec" opacity="0.85"/></svg>
<svg style="left:1559px;top:296px;" width="24" height="24" viewBox="0 0 24 24"><g fill="none" stroke="#ececec" stroke-width="1.4"><path d="M7 4.8 H17 L20.8 19.4 H3.2 Z"/><path d="M10.3 4.8 L9.1 19.4 M13.7 4.8 L14.9 19.4 M5.8 9.4 H18.2 M4.6 14.2 H19.4"/></g></svg>
<div class="" style="left:1586px;top:111px;width:12px;height:20.5px;background:#333;border-radius:3px 0 0 3px"></div>
<svg style="left:1587px;top:115.5px;" width="10" height="12" viewBox="0 0 10 12"><path d="M7 2 L3 6 L7 10" stroke="#aaa" stroke-width="1.4" fill="none"/></svg>
<div class="" style="left:0px;top:474.5px;width:1597px;height:609.5px;background-color:#1d1d1d;border-radius:6px;background-image:radial-gradient(circle,#292929 0.9px,transparent 1.5px);background-size:77.4px 77.4px;background-position:-1.8px -28.7px;border:1px solid #303030;border-top:1px solid #3a3a3a"></div>
<div class="" style="left:8px;top:1078px;width:1566px;height:3px;background:#363636;border-radius:2px"></div>
<div class="btn" style="left:6px;top:478px;width:36px;height:22px;border:1px solid #333"></div>
<svg style="left:9px;top:480px;" width="18" height="18" viewBox="0 0 18 18"><circle cx="4.2" cy="3.8" r="1.7" fill="#9c9c9c"/><circle cx="9" cy="4.8" r="1.8" fill="#b0b0b0"/><circle cx="6.4" cy="9.6" r="2.5" fill="#d0d0d0"/><circle cx="13.2" cy="13" r="4.1" fill="#ececec"/></svg>
<svg style="left:29px;top:484px" width="12" height="12" viewBox="-6 -6 12 12"><path d="M-3.5 -1.75 L0 1.75 L3.5 -1.75" fill="none" stroke="#ddd" stroke-width="1.4" stroke-linecap="round" stroke-linejoin="round"/></svg>
<div class="btn" style="left:48px;top:478px;width:86px;height:22px;border:1px solid #333"></div>
<span class="t " style="left:57px;top:481.5px;">Modifier</span>
<svg style="left:121px;top:484px" width="12" height="12" viewBox="-6 -6 12 12"><path d="M-3.5 -1.75 L0 1.75 L3.5 -1.75" fill="none" stroke="#ddd" stroke-width="1.4" stroke-linecap="round" stroke-linejoin="round"/></svg>
<span class="t " style="left:148px;top:481.5px;">View</span>
<span class="t " style="left:193px;top:481.5px;">Select</span>
<span class="t " style="left:246px;top:481.5px;">Add</span>
<span class="t " style="left:286px;top:481.5px;">Node</span>
<div class="btn" style="left:662px;top:478px;width:35px;height:22px;border:1px solid #333;border-radius:4px 0 0 4px"></div>
<svg style="left:665px;top:480px;" width="18" height="18" viewBox="0 0 18 18"><path d="M11.5 5 H13.2 A2 2 0 0 1 15.2 7 V11.6 A2 2 0 0 1 13.2 13.6 H11" fill="none" stroke="#e0e0e0" stroke-width="1.2"/><rect x="2" y="2.2" width="9.6" height="5.8" rx="1.3" fill="#e0e0e0"/><rect x="2" y="10.4" width="9.6" height="5.8" rx="1.3" fill="#e0e0e0"/><path d="M3.6 5.9 H10 M3.6 14.1 H10" stroke="#1d1d1d" stroke-width="1"/></svg>
<svg style="left:684px;top:484px" width="12" height="12" viewBox="-6 -6 12 12"><path d="M-3.5 -1.75 L0 1.75 L3.5 -1.75" fill="none" stroke="#ddd" stroke-width="1.4" stroke-linecap="round" stroke-linejoin="round"/></svg>
<div class="" style="left:698px;top:478px;width:112px;height:22px;background:#1f1f1f;border:1px solid #333;border-left:none;border-right:none"></div>
<span class="t " style="left:705px;top:481.5px;">Geometry Nodes</span>
<div class="gray" style="left:810px;top:478px;width:23px;height:22px;border-radius:0"></div>
<svg style="left:813px;top:480px;" width="18" height="18" viewBox="0 0 18 18"><path d="M9 2 C11 3.4 13 3.8 15.2 3.8 C15.2 10 13.4 14 9 16 C4.6 14 2.8 10 2.8 3.8 C5 3.8 7 3.4 9 2 Z" fill="none" stroke="#a4a4a4" stroke-width="1.3"/></svg>
<div class="gray" style="left:833.5px;top:478px;width:21.5px;height:22px;border-radius:0"></div>
<svg style="left:835px;top:480px;" width="18" height="18" viewBox="0 0 18 18"><g fill="none" stroke="#e0e0e0" stroke-width="1.3"><path d="M6.5 5 V2 H12.5 L16 5.5 V12.5 H12.5"/><rect x="2.5" y="5" width="9.5" height="11"/></g></svg>
<div class="gray" style="left:855.5px;top:478px;width:22.5px;height:22px;border-radius:0 4px 4px 0"></div>
<svg style="left:858px;top:480px;" width="18" height="18" viewBox="0 0 18 18"><path d="M4.5 4.5 L13.5 13.5 M13.5 4.5 L4.5 13.5" stroke="#e0e0e0" stroke-width="1.4" fill="none"/></svg>
<svg style="left:886px;top:479px;" width="20" height="20" viewBox="0 0 20 20"><g fill="none" stroke="#c0c0c0" stroke-width="1.3" stroke-linejoin="round"><path d="M11.5 2.5 L17.5 8.5 L15.5 9 L12.5 12 L12.5 15.5 L4.5 7.5 L8 7.5 L11 4.5 Z"/><path d="M8.3 11.7 L3 17"/></g></svg>
<div class="gray" style="left:1514px;top:478px;width:22px;height:22px;"></div>
<svg style="left:1515px;top:480px;" width="20" height="18" viewBox="0 0 20 18"><g transform="rotate(-135 10 9.5)"><path d="M5 4 V10 A5 5 0 0 0 15 10 V4" stroke="#a8a8a8" stroke-width="4.4" fill="none"/><path d="M5 4.9 V10 A5 5 0 0 0 15 10 V4.9" stroke="#545454" stroke-width="1.9" fill="none"/></g></svg>
<div class="blue" style="left:1543.5px;top:478px;width:21.5px;height:22px;border-radius:4px 0 0 4px"></div>
<svg style="left:1544px;top:480px;" width="20" height="18" viewBox="0 0 20 18"><circle cx="11.6" cy="7.6" r="5.4" fill="#fff"/><circle cx="7.8" cy="11" r="4.4" stroke="#fff" stroke-width="1.4" fill="none"/><path d="M10.4 7.2 L12.4 9.2" stroke="#4772b3" stroke-width="1.3"/></svg>
<div class="btn" style="left:1565px;top:478px;width:23px;height:22px;border-radius:0 4px 4px 0;border:1px solid #333"></div>
<svg style="left:1570px;top:484px" width="12" height="12" viewBox="-6 -6 12 12"><path d="M-3.5 -1.75 L0 1.75 L3.5 -1.75" fill="none" stroke="#ddd" stroke-width="1.4" stroke-linecap="round" stroke-linejoin="round"/></svg>
<svg style="left:18px;top:520px;" width="18" height="18" viewBox="0 0 18 18"><g stroke="#e0e0e0" stroke-width="1.3" fill="none"><path d="M1.5 5 V2 H4.5 M13.5 2 H16.5 V5 M16.5 13 V16 H13.5 M4.5 16 H1.5 V13"/></g><rect x="4.7" y="4.7" width="8.6" height="8.6" rx="1" fill="#e0e0e0"/></svg>
<span class="t " style="left:44px;top:521.5px;">Grid</span>
<svg style="left:84px;top:523px" width="12" height="12" viewBox="-6 -6 12 12"><path d="M-2.0 -4 L2.0 0 L-2.0 4" fill="none" stroke="#ddd" stroke-width="1.3" stroke-linecap="round" stroke-linejoin="round"/></svg>
<svg style="left:104px;top:520px;" width="18" height="18" viewBox="0 0 18 18"><circle cx="4.2" cy="3.8" r="1.7" fill="#9c9c9c"/><circle cx="9" cy="4.8" r="1.8" fill="#b0b0b0"/><circle cx="6.4" cy="9.6" r="2.5" fill="#d0d0d0"/><circle cx="13.2" cy="13" r="4.1" fill="#ececec"/></svg>
<span class="t " style="left:130px;top:521.5px;">GeometryNodes</span>
<svg style="left:239px;top:523px" width="12" height="12" viewBox="-6 -6 12 12"><path d="M-2.0 -4 L2.0 0 L-2.0 4" fill="none" stroke="#ddd" stroke-width="1.3" stroke-linecap="round" stroke-linejoin="round"/></svg>
<svg style="left:259px;top:520px;" width="18" height="18" viewBox="0 0 18 18"><path d="M11.5 5 H13.2 A2 2 0 0 1 15.2 7 V11.6 A2 2 0 0 1 13.2 13.6 H11" fill="none" stroke="#e0e0e0" stroke-width="1.2"/><rect x="2" y="2.2" width="9.6" height="5.8" rx="1.3" fill="#e0e0e0"/><rect x="2" y="10.4" width="9.6" height="5.8" rx="1.3" fill="#e0e0e0"/><path d="M3.6 5.9 H10 M3.6 14.1 H10" stroke="#1d1d1d" stroke-width="1"/></svg>
<span class="t " style="left:286px;top:521.5px;">Geometry Nodes</span>
<svg style="left:0px;top:534px;" width="6" height="10" viewBox="0 0 6 10"><path d="M0.5 1.5 L4 5 L0.5 8.5" stroke="#888" stroke-width="1.1" fill="none"/></svg>
<svg style="left:0;top:503px" width="1290" height="575" viewBox="0 503 1290 575"><path d="M347.5 840 C408.8 840 408.8 713 470 713" stroke="#111" stroke-width="3.0" fill="none" opacity="0.75"/><path d="M347.5 840 C408.8 840 408.8 713 470 713" stroke="#a1a1a1" stroke-width="1.4" fill="none"/><path d="M347.5 840 C408.8 840 408.8 730 470 730" stroke="#111" stroke-width="3.0" fill="none" opacity="0.75"/><path d="M347.5 840 C408.8 840 408.8 730 470 730" stroke="#a1a1a1" stroke-width="1.4" fill="none"/><path d="M578 677 C596.5 677 612.5 681.8 631 681.8" stroke="#111" stroke-width="3.3" fill="none" opacity="0.75"/><path d="M578 677 C596.5 677 612.5 681.8 631 681.8" stroke="#00d6a3" stroke-width="1.7" fill="none"/><path d="M740 642.8 C763.4 642.8 794.6 654.6 818 654.6" stroke="#111" stroke-width="3.3" fill="none" opacity="0.75"/><path d="M740 642.8 C763.4 642.8 794.6 654.6 818 654.6" stroke="#00d6a3" stroke-width="1.7" fill="none"/><path d="M927 654.6 C949.0 654.6 949.0 731.8 971 731.8" stroke="#111" stroke-width="3.3" fill="none" opacity="0.75"/><path d="M927 654.6 C949.0 654.6 949.0 731.8 971 731.8" stroke="#00d6a3" stroke-width="1.7" fill="none"/><path d="M915 808.2 C943.0 808.2 943.0 765.8 971 765.8" stroke="#111" stroke-width="3.3" fill="none" opacity="0.75"/><path d="M915 808.2 C943.0 808.2 943.0 765.8 971 765.8" stroke="#00d6a3" stroke-width="1.7" fill="none"/><path d="M1079 712.4 C1103.5 712.4 1103.5 682 1128 682" stroke="#111" stroke-width="3.3" fill="none" opacity="0.75"/><path d="M1079 712.4 C1103.5 712.4 1103.5 682 1128 682" stroke="#00d6a3" stroke-width="1.7" fill="none"/><path d="M755 795.8 C786.5 795.8 786.5 705.6 818 705.6" stroke="#544f9c" stroke-width="1.1" fill="none"/></svg>
<div class="node" style="left:239.3px;top:795.3px;width:108.19999999999999px;height:72.70000000000005px;"><div class="nh" style="background:#1b1b1b;height:15.5px"></div></div>
<svg style="left:246.3px;top:798.30px" width="10" height="10" viewBox="-5 -5 10 10"><path d="M-3 -1.5 L0 1.5 L3 -1.5" fill="none" stroke="#e0e0e0" stroke-width="1.1" stroke-linecap="round" stroke-linejoin="round"/></svg>
<span class="nt" style="left:258.8px;top:797.80px;">Group Input</span>
<span class="nt" style="right:1262px;top:817.10px;">Geometry</span>
<svg style="left:342.5px;top:817.6px;" width="10" height="10" viewBox="0 0 10 10"><circle cx="5" cy="5" r="3.4" fill="#00d6a3" stroke="#151515" stroke-width="0.9"/></svg>
<span class="nt" style="right:1262px;top:834.10px;">Size X</span>
<svg style="left:342.5px;top:834.6px;" width="10" height="10" viewBox="0 0 10 10"><circle cx="5" cy="5" r="3.4" fill="#a1a1a1" stroke="#151515" stroke-width="0.9"/></svg>
<svg style="left:342.5px;top:851.6px;" width="10" height="10" viewBox="0 0 10 10"><circle cx="5" cy="5" r="3.3" fill="#2e2e2e" stroke="#5e5e5e" stroke-width="1"/></svg>
<div class="node" style="left:470px;top:650.3px;width:108px;height:125.70000000000005px;"><div class="nh" style="background:#1f7560;height:15.5px"></div></div>
<svg style="left:477px;top:653.30px" width="10" height="10" viewBox="-5 -5 10 10"><path d="M-3 -1.5 L0 1.5 L3 -1.5" fill="none" stroke="#e0e0e0" stroke-width="1.1" stroke-linecap="round" stroke-linejoin="round"/></svg>
<span class="nt" style="left:489.5px;top:652.80px;">Grid</span>
<span class="nt" style="right:1031px;top:671.60px;">Mesh</span>
<svg style="left:573px;top:672.1px;" width="10" height="10" viewBox="0 0 10 10"><circle cx="5" cy="5" r="3.4" fill="#00d6a3" stroke="#151515" stroke-width="0.9"/></svg>
<span class="nt" style="right:1031px;top:688.60px;">UV Map</span>
<svg style="left:572.5px;top:688.6px;" width="11" height="11" viewBox="0 0 11 11"><path d="M5.5 1.2 L9.8 5.5 L5.5 9.8 L1.2 5.5 Z" fill="#6363c7" stroke="#151515" stroke-width="0.8"/></svg>
<span class="nt" style="left:479px;top:707.60px;">Size X</span>
<svg style="left:465px;top:708.1px;" width="10" height="10" viewBox="0 0 10 10"><circle cx="5" cy="5" r="3.4" fill="#a1a1a1" stroke="#151515" stroke-width="0.9"/></svg>
<span class="nt" style="left:479px;top:724.60px;">Size Y</span>
<svg style="left:465px;top:725.1px;" width="10" height="10" viewBox="0 0 10 10"><circle cx="5" cy="5" r="3.4" fill="#a1a1a1" stroke="#151515" stroke-width="0.9"/></svg>
<div class="fld" style="left:479px;top:740.1px;width:90px;height:15.0px;height:15px;border-radius:2px"></div>
<span class="nt" style="left:490.5px;top:742.10px;">Vertices X</span>
<span class="nt" style="right:1041px;top:742.10px;">50</span>
<svg style="left:465px;top:742.6px;" width="10" height="10" viewBox="0 0 10 10"><circle cx="5" cy="5" r="3.4" fill="#598c5c" stroke="#151515" stroke-width="0.9"/></svg>
<div class="fld" style="left:479px;top:757.1px;width:90px;height:15.0px;height:15px;border-radius:2px"></div>
<span class="nt" style="left:490.5px;top:759.10px;">Vertices Y</span>
<span class="nt" style="right:1041px;top:759.10px;">50</span>
<svg style="left:465px;top:759.6px;" width="10" height="10" viewBox="0 0 10 10"><circle cx="5" cy="5" r="3.4" fill="#598c5c" stroke="#151515" stroke-width="0.9"/></svg>
<div class="node" style="left:631px;top:616px;width:109px;height:127.5px;"><div class="nh" style="background:#1f7560;height:15.5px"></div></div>
<svg style="left:638px;top:619.00px" width="10" height="10" viewBox="-5 -5 10 10"><path d="M-3 -1.5 L0 1.5 L3 -1.5" fill="none" stroke="#e0e0e0" stroke-width="1.1" stroke-linecap="round" stroke-linejoin="round"/></svg>
<span class="nt" style="left:650.5px;top:618.50px;">Mesh to Points</span>
<span class="nt" style="right:869px;top:637.55px;">Points</span>
<svg style="left:735px;top:638.05px;" width="10" height="10" viewBox="0 0 10 10"><circle cx="5" cy="5" r="3.4" fill="#00d6a3" stroke="#151515" stroke-width="0.9"/></svg>
<div class="dd" style="left:640px;top:657.05px;width:92px;height:16.0px;"></div>
<span class="nt" style="left:646px;top:659.55px;">Vertices</span>
<svg style="left:720px;top:660.35px" width="10" height="10" viewBox="-5 -5 10 10"><path d="M-2.6 -1.3 L0 1.3 L2.6 -1.3" fill="none" stroke="#e0e0e0" stroke-width="1.1" stroke-linecap="round" stroke-linejoin="round"/></svg>
<span class="nt" style="left:640.5px;top:676.55px;">Mesh</span>
<svg style="left:626px;top:677.05px;" width="10" height="10" viewBox="0 0 10 10"><circle cx="5" cy="5" r="3.4" fill="#00d6a3" stroke="#151515" stroke-width="0.9"/></svg>
<span class="nt" style="left:640.5px;top:693.55px;">Selection</span>
<svg style="left:625.5px;top:693.55px;" width="11" height="11" viewBox="0 0 11 11"><path d="M5.5 1.2 L9.8 5.5 L5.5 9.8 L1.2 5.5 Z" fill="#cca6d6" stroke="#151515" stroke-width="0.8"/><circle cx="5.5" cy="5.5" r="1.3" fill="#1c1c1c"/></svg>
<span class="nt" style="left:640.5px;top:710.55px;">Position</span>
<svg style="left:625.5px;top:710.55px;" width="11" height="11" viewBox="0 0 11 11"><path d="M5.5 1.2 L9.8 5.5 L5.5 9.8 L1.2 5.5 Z" fill="#6363c7" stroke="#151515" stroke-width="0.8"/></svg>
<div class="fld" style="left:640px;top:726.05px;width:91px;height:15.0px;height:15px;border-radius:2px"></div>
<span class="nt" style="left:651.5px;top:728.05px;">Radius</span>
<span class="nt" style="right:879px;top:728.05px;">0.05 m</span>
<svg style="left:625.5px;top:728.05px;" width="11" height="11" viewBox="0 0 11 11"><path d="M5.5 1.2 L9.8 5.5 L5.5 9.8 L1.2 5.5 Z" fill="#b8b8b8" stroke="#151515" stroke-width="0.8"/><circle cx="5.5" cy="5.5" r="1.3" fill="#1c1c1c"/></svg>
<div class="node" style="left:818px;top:628.7px;width:109px;height:87.79999999999995px;"><div class="nh" style="background:#1f7560;height:15.5px"></div></div>
<svg style="left:825px;top:631.70px" width="10" height="10" viewBox="-5 -5 10 10"><path d="M-3 -1.5 L0 1.5 L3 -1.5" fill="none" stroke="#e0e0e0" stroke-width="1.1" stroke-linecap="round" stroke-linejoin="round"/></svg>
<span class="nt" style="left:837.5px;top:631.20px;">Set Position</span>
<span class="nt" style="left:827.5px;top:649.10px;">Geometry</span>
<svg style="left:813px;top:649.6px;" width="10" height="10" viewBox="0 0 10 10"><circle cx="5" cy="5" r="3.4" fill="#00d6a3" stroke="#151515" stroke-width="0.9"/></svg>
<svg style="left:922px;top:649.6px;" width="10" height="10" viewBox="0 0 10 10"><circle cx="5" cy="5" r="3.4" fill="#00d6a3" stroke="#151515" stroke-width="0.9"/></svg>
<span class="nt" style="left:827.5px;top:666.10px;">Selection</span>
<svg style="left:812.5px;top:666.1px;" width="11" height="11" viewBox="0 0 11 11"><path d="M5.5 1.2 L9.8 5.5 L5.5 9.8 L1.2 5.5 Z" fill="#cca6d6" stroke="#151515" stroke-width="0.8"/><circle cx="5.5" cy="5.5" r="1.3" fill="#1c1c1c"/></svg>
<span class="nt" style="left:827.5px;top:683.10px;">Position</span>
<svg style="left:812.5px;top:683.1px;" width="11" height="11" viewBox="0 0 11 11"><path d="M5.5 1.2 L9.8 5.5 L5.5 9.8 L1.2 5.5 Z" fill="#6363c7" stroke="#151515" stroke-width="0.8"/></svg>
<span class="nt" style="left:827.5px;top:700.10px;">Offset</span>
<svg style="left:812.5px;top:700.1px;" width="11" height="11" viewBox="0 0 11 11"><path d="M5.5 1.2 L9.8 5.5 L5.5 9.8 L1.2 5.5 Z" fill="#6363c7" stroke="#151515" stroke-width="0.8"/></svg>
<div class="node" style="left:646px;top:768.8px;width:109px;height:225.70000000000005px;"><div class="nh" style="background:#28688e;height:15.5px"></div></div>
<svg style="left:653px;top:771.80px" width="10" height="10" viewBox="-5 -5 10 10"><path d="M-3 -1.5 L0 1.5 L3 -1.5" fill="none" stroke="#e0e0e0" stroke-width="1.1" stroke-linecap="round" stroke-linejoin="round"/></svg>
<span class="nt" style="left:665.5px;top:771.30px;">Random Value</span>
<span class="nt" style="right:854px;top:790.55px;">Value</span>
<svg style="left:749.5px;top:790.55px;" width="11" height="11" viewBox="0 0 11 11"><path d="M5.5 1.2 L9.8 5.5 L5.5 9.8 L1.2 5.5 Z" fill="#6363c7" stroke="#151515" stroke-width="0.8"/></svg>
<div class="dd" style="left:654px;top:811.3499999999999px;width:93px;height:16.0px;"></div>
<span class="nt" style="left:660px;top:813.85px;">Vector</span>
<svg style="left:735px;top:814.65px" width="10" height="10" viewBox="-5 -5 10 10"><path d="M-2.6 -1.3 L0 1.3 L2.6 -1.3" fill="none" stroke="#e0e0e0" stroke-width="1.1" stroke-linecap="round" stroke-linejoin="round"/></svg>
<span class="nt" style="left:655.5px;top:830.55px;">Min</span>
<svg style="left:640.5px;top:830.55px;" width="11" height="11" viewBox="0 0 11 11"><path d="M5.5 1.2 L9.8 5.5 L5.5 9.8 L1.2 5.5 Z" fill="#6363c7" stroke="#151515" stroke-width="0.8"/><circle cx="5.5" cy="5.5" r="1.3" fill="#1c1c1c"/></svg>
<svg style="left:654px;top:845.85px" width="92" height="46" viewBox="0 0 92 46"><defs><clipPath id="vc654844"><rect x="0" y="0" width="92" height="45.35" rx="2.2"/></clipPath></defs><g clip-path="url(#vc654844)"><rect x="0" y="0.00" width="92" height="14.65" fill="#545454"/><rect x="0" y="15.35" width="92" height="14.65" fill="#545454"/><rect x="0" y="30.70" width="92" height="14.65" fill="#545454"/></g></svg>
<span class="nt" style="left:650.0px;width:100px;text-align:center;top:847.65px;">-0.002</span>
<span class="nt" style="left:650.0px;width:100px;text-align:center;top:863.00px;">-0.002</span>
<span class="nt" style="left:650.0px;width:100px;text-align:center;top:878.35px;">0.000</span>
<span class="nt" style="left:655.5px;top:895.20px;">Max</span>
<svg style="left:640.5px;top:895.2px;" width="11" height="11" viewBox="0 0 11 11"><path d="M5.5 1.2 L9.8 5.5 L5.5 9.8 L1.2 5.5 Z" fill="#6363c7" stroke="#151515" stroke-width="0.8"/><circle cx="5.5" cy="5.5" r="1.3" fill="#1c1c1c"/></svg>
<svg style="left:654px;top:910.00px" width="92" height="46" viewBox="0 0 92 46"><defs><clipPath id="vc654909"><rect x="0" y="0" width="92" height="45.35" rx="2.2"/></clipPath></defs><g clip-path="url(#vc654909)"><rect x="0" y="0.00" width="92" height="14.65" fill="#545454"/><rect x="0" y="15.35" width="92" height="14.65" fill="#545454"/><rect x="0" y="30.70" width="92" height="14.65" fill="#545454"/></g></svg>
<span class="nt" style="left:650.0px;width:100px;text-align:center;top:911.80px;">0.002</span>
<span class="nt" style="left:650.0px;width:100px;text-align:center;top:927.15px;">0.002</span>
<span class="nt" style="left:650.0px;width:100px;text-align:center;top:942.50px;">0.000</span>
<span class="nt" style="left:655.5px;top:960.20px;">ID</span>
<svg style="left:640.5px;top:960.2px;" width="11" height="11" viewBox="0 0 11 11"><path d="M5.5 1.2 L9.8 5.5 L5.5 9.8 L1.2 5.5 Z" fill="#598c5c" stroke="#151515" stroke-width="0.8"/></svg>
<div class="fld" style="left:654px;top:975.7px;width:92px;height:15.0px;height:15px;border-radius:2px"></div>
<span class="nt" style="left:665.5px;top:977.70px;">Seed</span>
<span class="nt" style="right:864px;top:977.70px;">0</span>
<svg style="left:640.5px;top:977.7px;" width="11" height="11" viewBox="0 0 11 11"><path d="M5.5 1.2 L9.8 5.5 L5.5 9.8 L1.2 5.5 Z" fill="#598c5c" stroke="#151515" stroke-width="0.8"/><circle cx="5.5" cy="5.5" r="1.3" fill="#1c1c1c"/></svg>
<div class="node" style="left:807px;top:781px;width:108px;height:230px;"><div class="nh" style="background:#1f7560;height:15.5px"></div></div>
<svg style="left:814px;top:784.00px" width="10" height="10" viewBox="-5 -5 10 10"><path d="M-3 -1.5 L0 1.5 L3 -1.5" fill="none" stroke="#e0e0e0" stroke-width="1.1" stroke-linecap="round" stroke-linejoin="round"/></svg>
<span class="nt" style="left:826.5px;top:783.50px;">Cone</span>
<span class="nt" style="right:694px;top:802.70px;">Mesh</span>
<svg style="left:910px;top:803.2px;" width="10" height="10" viewBox="0 0 10 10"><circle cx="5" cy="5" r="3.4" fill="#00d6a3" stroke="#151515" stroke-width="0.9"/></svg>
<span class="nt" style="right:694px;top:819.70px;">Top</span>
<svg style="left:909.5px;top:819.7px;" width="11" height="11" viewBox="0 0 11 11"><path d="M5.5 1.2 L9.8 5.5 L5.5 9.8 L1.2 5.5 Z" fill="#cca6d6" stroke="#151515" stroke-width="0.8"/></svg>
<span class="nt" style="right:694px;top:836.70px;">Bottom</span>
<svg style="left:909.5px;top:836.7px;" width="11" height="11" viewBox="0 0 11 11"><path d="M5.5 1.2 L9.8 5.5 L5.5 9.8 L1.2 5.5 Z" fill="#cca6d6" stroke="#151515" stroke-width="0.8"/></svg>
<span class="nt" style="right:694px;top:853.70px;">Side</span>
<svg style="left:909.5px;top:853.7px;" width="11" height="11" viewBox="0 0 11 11"><path d="M5.5 1.2 L9.8 5.5 L5.5 9.8 L1.2 5.5 Z" fill="#cca6d6" stroke="#151515" stroke-width="0.8"/></svg>
<span class="nt" style="right:694px;top:870.70px;">UV Map</span>
<svg style="left:909.5px;top:870.7px;" width="11" height="11" viewBox="0 0 11 11"><path d="M5.5 1.2 L9.8 5.5 L5.5 9.8 L1.2 5.5 Z" fill="#6363c7" stroke="#151515" stroke-width="0.8"/></svg>
<span class="nt" style="left:815.5px;top:891.70px;">Fill Ty...</span>
<div class="dd" style="left:856px;top:889.7px;width:51px;height:16.0px;"></div>
<span class="nt" style="left:862px;top:892.20px;">N-Gon</span>
<svg style="left:895px;top:893.00px" width="10" height="10" viewBox="-5 -5 10 10"><path d="M-2.6 -1.3 L0 1.3 L2.6 -1.3" fill="none" stroke="#e0e0e0" stroke-width="1.1" stroke-linecap="round" stroke-linejoin="round"/></svg>
<div class="fld" style="left:815px;top:908.05px;width:91px;height:15.0px;height:15px;border-radius:2px"></div>
<span class="nt" style="left:826.5px;top:910.05px;">Vertices</span>
<span class="nt" style="right:704px;top:910.05px;">32</span>
<svg style="left:802px;top:910.55px;" width="10" height="10" viewBox="0 0 10 10"><circle cx="5" cy="5" r="3.4" fill="#598c5c" stroke="#151515" stroke-width="0.9"/></svg>
<div class="fld" style="left:815px;top:925.05px;width:91px;height:15.0px;height:15px;border-radius:2px"></div>
<span class="nt" style="left:826.5px;top:927.05px;">Side Segme...</span>
<span class="nt" style="right:704px;top:927.05px;">1</span>
<svg style="left:802px;top:927.55px;" width="10" height="10" viewBox="0 0 10 10"><circle cx="5" cy="5" r="3.4" fill="#598c5c" stroke="#151515" stroke-width="0.9"/></svg>
<div class="fld" style="left:815px;top:942.05px;width:91px;height:15.0px;height:15px;border-radius:2px"></div>
<span class="nt" style="left:826.5px;top:944.05px;">Fill Segments</span>
<span class="nt" style="right:704px;top:944.05px;">1</span>
<svg style="left:802px;top:944.55px;" width="10" height="10" viewBox="0 0 10 10"><circle cx="5" cy="5" r="3.4" fill="#598c5c" stroke="#151515" stroke-width="0.9"/></svg>
<div class="fld" style="left:815px;top:959.05px;width:91px;height:15.0px;height:15px;border-radius:2px"></div>
<span class="nt" style="left:826.5px;top:961.05px;">Radius Top</span>
<span class="nt" style="right:704px;top:961.05px;">0 m</span>
<svg style="left:802px;top:961.55px;" width="10" height="10" viewBox="0 0 10 10"><circle cx="5" cy="5" r="3.4" fill="#a1a1a1" stroke="#151515" stroke-width="0.9"/></svg>
<div class="fld" style="left:815px;top:976.05px;width:91px;height:15.0px;height:15px;border-radius:2px"></div>
<span class="nt" style="left:826.5px;top:978.05px;">Radiu...</span>
<span class="nt" style="right:704px;top:978.05px;">0.003 m</span>
<svg style="left:802px;top:978.55px;" width="10" height="10" viewBox="0 0 10 10"><circle cx="5" cy="5" r="3.4" fill="#a1a1a1" stroke="#151515" stroke-width="0.9"/></svg>
<div class="fld" style="left:815px;top:993.05px;width:91px;height:15.0px;height:15px;border-radius:2px"></div>
<span class="nt" style="left:826.5px;top:995.05px;">Depth</span>
<span class="nt" style="right:704px;top:995.05px;">1 m</span>
<svg style="left:802px;top:995.55px;" width="10" height="10" viewBox="0 0 10 10"><circle cx="5" cy="5" r="3.4" fill="#a1a1a1" stroke="#151515" stroke-width="0.9"/></svg>
<div class="node" style="left:971px;top:685.2px;width:108px;height:255.5999999999999px;"><div class="nh" style="background:#1f7560;height:15.5px"></div></div>
<svg style="left:978px;top:688.20px" width="10" height="10" viewBox="-5 -5 10 10"><path d="M-3 -1.5 L0 1.5 L3 -1.5" fill="none" stroke="#e0e0e0" stroke-width="1.1" stroke-linecap="round" stroke-linejoin="round"/></svg>
<span class="nt" style="left:990.5px;top:687.70px;">Instance on Points</span>
<span class="nt" style="right:530px;top:706.80px;">Instances</span>
<svg style="left:1074px;top:707.3px;" width="10" height="10" viewBox="0 0 10 10"><circle cx="5" cy="5" r="3.4" fill="#00d6a3" stroke="#151515" stroke-width="0.9"/></svg>
<span class="nt" style="left:980px;top:726.55px;">Points</span>
<svg style="left:966px;top:727.05px;" width="10" height="10" viewBox="0 0 10 10"><circle cx="5" cy="5" r="3.4" fill="#00d6a3" stroke="#151515" stroke-width="0.9"/></svg>
<span class="nt" style="left:980px;top:743.55px;">Selection</span>
<svg style="left:965.5px;top:743.55px;" width="11" height="11" viewBox="0 0 11 11"><path d="M5.5 1.2 L9.8 5.5 L5.5 9.8 L1.2 5.5 Z" fill="#cca6d6" stroke="#151515" stroke-width="0.8"/><circle cx="5.5" cy="5.5" r="1.3" fill="#1c1c1c"/></svg>
<span class="nt" style="left:980px;top:760.55px;">Instance</span>
<svg style="left:966px;top:761.05px;" width="10" height="10" viewBox="0 0 10 10"><circle cx="5" cy="5" r="3.4" fill="#00d6a3" stroke="#151515" stroke-width="0.9"/></svg>
<div class="" style="left:979.5px;top:778.05px;width:10.0px;height:10.0px;background:#545454;border-radius:2px"></div>
<span class="nt" style="left:993px;top:777.55px;">Pick Instance</span>
<svg style="left:965.5px;top:777.55px;" width="11" height="11" viewBox="0 0 11 11"><path d="M5.5 1.2 L9.8 5.5 L5.5 9.8 L1.2 5.5 Z" fill="#cca6d6" stroke="#151515" stroke-width="0.8"/><circle cx="5.5" cy="5.5" r="1.3" fill="#1c1c1c"/></svg>
<span class="nt" style="left:980px;top:794.55px;">Instance Index</span>
<svg style="left:965.5px;top:794.55px;" width="11" height="11" viewBox="0 0 11 11"><path d="M5.5 1.2 L9.8 5.5 L5.5 9.8 L1.2 5.5 Z" fill="#598c5c" stroke="#151515" stroke-width="0.8"/></svg>
<span class="nt" style="left:980px;top:811.55px;">Rotation</span>
<svg style="left:965.5px;top:811.55px;" width="11" height="11" viewBox="0 0 11 11"><path d="M5.5 1.2 L9.8 5.5 L5.5 9.8 L1.2 5.5 Z" fill="#a663c7" stroke="#151515" stroke-width="0.8"/><circle cx="5.5" cy="5.5" r="1.3" fill="#1c1c1c"/></svg>
<svg style="left:979px;top:827.05px" width="92" height="46" viewBox="0 0 92 46"><defs><clipPath id="vc979826"><rect x="0" y="0" width="92" height="45.35" rx="2.2"/></clipPath></defs><g clip-path="url(#vc979826)"><rect x="0" y="0.00" width="92" height="14.65" fill="#545454"/><rect x="0" y="15.35" width="92" height="14.65" fill="#545454"/><rect x="0" y="30.70" width="92" height="14.65" fill="#545454"/></g></svg>
<span class="nt" style="left:990.5px;top:828.85px;">X</span>
<span class="nt" style="right:539px;top:828.85px;">0°</span>
<span class="nt" style="left:990.5px;top:844.20px;">Y</span>
<span class="nt" style="right:539px;top:844.20px;">0°</span>
<span class="nt" style="left:990.5px;top:859.55px;">Z</span>
<span class="nt" style="right:539px;top:859.55px;">0°</span>
<span class="nt" style="left:980px;top:876.60px;">Scale</span>
<svg style="left:965.5px;top:876.6px;" width="11" height="11" viewBox="0 0 11 11"><path d="M5.5 1.2 L9.8 5.5 L5.5 9.8 L1.2 5.5 Z" fill="#6363c7" stroke="#151515" stroke-width="0.8"/><circle cx="5.5" cy="5.5" r="1.3" fill="#1c1c1c"/></svg>
<svg style="left:979px;top:891.90px" width="92" height="46" viewBox="0 0 92 46"><defs><clipPath id="vc979890"><rect x="0" y="0" width="92" height="45.35" rx="2.2"/></clipPath></defs><g clip-path="url(#vc979890)"><rect x="0" y="0.00" width="92" height="14.65" fill="#545454"/><rect x="0" y="15.35" width="92" height="14.65" fill="#545454"/><rect x="0" y="30.70" width="92" height="14.65" fill="#545454"/></g></svg>
<span class="nt" style="left:990.5px;top:893.70px;">X</span>
<span class="nt" style="right:539px;top:893.70px;">1.000</span>
<span class="nt" style="left:990.5px;top:909.05px;">Y</span>
<span class="nt" style="right:539px;top:909.05px;">1.000</span>
<span class="nt" style="left:990.5px;top:924.40px;">Z</span>
<span class="nt" style="right:539px;top:924.40px;">1.000</span>
<div class="node" style="left:1128.5px;top:655.7px;width:108.0px;height:54.09999999999991px;"><div class="nh" style="background:#1b1b1b;height:15.5px"></div></div>
<svg style="left:1135.5px;top:658.70px" width="10" height="10" viewBox="-5 -5 10 10"><path d="M-3 -1.5 L0 1.5 L3 -1.5" fill="none" stroke="#e0e0e0" stroke-width="1.1" stroke-linecap="round" stroke-linejoin="round"/></svg>
<span class="nt" style="left:1148.0px;top:658.20px;">Group Output</span>
<span class="nt" style="left:1137px;top:676.60px;">Geometry</span>
<svg style="left:1123.5px;top:677.1px;" width="10" height="10" viewBox="0 0 10 10"><circle cx="5" cy="5" r="3.4" fill="#00d6a3" stroke="#151515" stroke-width="0.9"/></svg>
<svg style="left:1123.5px;top:693.5px;" width="10" height="10" viewBox="0 0 10 10"><circle cx="5" cy="5" r="3.3" fill="#2e2e2e" stroke="#5e5e5e" stroke-width="1"/></svg>
<div class="" style="left:1566px;top:503px;width:31px;height:580px;background:#161616;border-radius:0 0 6px 0"></div>
<div class="" style="left:1574px;top:509px;width:21px;height:53px;background:#2c2c2c;border-radius:0 4px 4px 0;border:1px solid #2f2f2f;border-left:none"></div>
<div style="left:1574px;top:509px;width:21px;height:53px"><span class="t" style="left:50%;top:50%;transform:translate(-50%,-50%) rotate(90deg);color:#ffffff">Group</span></div>
<div class="" style="left:1574px;top:568px;width:21px;height:47px;background:#1d1d1d;border-radius:0 4px 4px 0;border:1px solid #2f2f2f;border-left:none"></div>
<div style="left:1574px;top:568px;width:21px;height:47px"><span class="t" style="left:50%;top:50%;transform:translate(-50%,-50%) rotate(90deg);color:#c8c8c8">Node</span></div>
<div class="" style="left:1574px;top:621px;width:21px;height:43px;background:#1d1d1d;border-radius:0 4px 4px 0;border:1px solid #2f2f2f;border-left:none"></div>
<div style="left:1574px;top:621px;width:21px;height:43px"><span class="t" style="left:50%;top:50%;transform:translate(-50%,-50%) rotate(90deg);color:#c8c8c8">Tool</span></div>
<div class="" style="left:1574px;top:670px;width:21px;height:44px;background:#1d1d1d;border-radius:0 4px 4px 0;border:1px solid #2f2f2f;border-left:none"></div>
<div style="left:1574px;top:670px;width:21px;height:44px"><span class="t" style="left:50%;top:50%;transform:translate(-50%,-50%) rotate(90deg);color:#c8c8c8">View</span></div>
<div class="" style="left:1574px;top:720px;width:21px;height:104px;background:#1d1d1d;border-radius:0 4px 4px 0;border:1px solid #2f2f2f;border-left:none"></div>
<div style="left:1574px;top:720px;width:21px;height:104px"><span class="t" style="left:50%;top:50%;transform:translate(-50%,-50%) rotate(90deg);color:#c8c8c8">Node Wrangler</span></div>
<div class="panel" style="left:1288px;top:506.5px;width:277px;height:237.5px;"></div>
<div class="" style="left:1288px;top:684px;width:277px;height:60px;background:#333;border-radius:0 0 5px 5px"></div>
<svg style="left:1296.5px;top:515.5px" width="12" height="12" viewBox="-6 -6 12 12"><path d="M-4 -2.0 L0 2.0 L4 -2.0" fill="none" stroke="#d8d8d8" stroke-width="1.3" stroke-linecap="round" stroke-linejoin="round"/></svg>
<span class="t " style="left:1313px;top:513.5px;">Group</span>
<svg style="left:1542px;top:518px;" width="13" height="6" viewBox="0 0 13 6"><rect x="0.0" y="0.0" width="1.4" height="1.4" fill="#5c5c5c"/><rect x="0.0" y="3.4" width="1.4" height="1.4" fill="#5c5c5c"/><rect x="3.4" y="0.0" width="1.4" height="1.4" fill="#5c5c5c"/><rect x="3.4" y="3.4" width="1.4" height="1.4" fill="#5c5c5c"/><rect x="6.8" y="0.0" width="1.4" height="1.4" fill="#5c5c5c"/><rect x="6.8" y="3.4" width="1.4" height="1.4" fill="#5c5c5c"/><rect x="10.2" y="0.0" width="1.4" height="1.4" fill="#5c5c5c"/><rect x="10.2" y="3.4" width="1.4" height="1.4" fill="#5c5c5c"/></svg>
<span class="t " style="right:204.5px;top:547.5px;color:#d0d0d0">Name</span>
<div class="tf" style="left:1407px;top:545px;width:147.5px;height:20px;"></div>
<span class="t " style="left:1415px;top:547.5px;">Geometry Nodes</span>
<span class="t " style="right:204.5px;top:576.0px;color:#d0d0d0">Description</span>
<div class="tf" style="left:1407px;top:573.5px;width:147.5px;height:20.0px;"></div>
<span class="t " style="right:204.5px;top:604.0px;color:#d0d0d0">Color Tag</span>
<div class="tf" style="left:1407px;top:602px;width:147.5px;height:20px;"></div>
<span class="t " style="left:1415px;top:604.0px;">None</span>
<svg style="left:1541.5px;top:606.5px" width="12" height="12" viewBox="-6 -6 12 12"><path d="M-3.5 -1.75 L0 1.75 L3.5 -1.75" fill="none" stroke="#ddd" stroke-width="1.4" stroke-linecap="round" stroke-linejoin="round"/></svg>
<span class="t " style="right:204.5px;top:632.5px;color:#d0d0d0">Node Width</span>
<div class="" style="left:1407px;top:630px;width:125px;height:20px;background:#545454;border-radius:4px 0 0 4px"></div>
<span class="t" style="left:1407px;width:125px;text-align:center;top:632px">140</span>
<div class="" style="left:1533px;top:630px;width:21.5px;height:20px;background:#434343;border-radius:0 4px 4px 0"></div>
<svg style="left:1535px;top:632px;" width="16" height="16" viewBox="0 0 16 16"><g fill="none" stroke="#555" stroke-width="1.3"><path d="M2.5 13 V4 A1.5 1.5 0 0 1 4 2.5 H9 A1.5 1.5 0 0 1 10.5 4 V5.5"/><rect x="4.5" y="5.5" width="9" height="8" rx="1.5"/></g></svg>
<svg style="left:1302px;top:662.5px" width="12" height="12" viewBox="-6 -6 12 12"><path d="M-4 -2.0 L0 2.0 L4 -2.0" fill="none" stroke="#d8d8d8" stroke-width="1.3" stroke-linecap="round" stroke-linejoin="round"/></svg>
<span class="t " style="left:1321px;top:661.0px;color:#d0d0d0">Usage</span>
<div class="" style="left:1407px;top:694px;width:14px;height:14px;background:#4772b3;border-radius:3px"></div>
<svg style="left:1407px;top:694px;" width="14" height="14" viewBox="0 0 14 14"><path d="M3.2 7.2 L6 10 L11 4.2" stroke="#fff" stroke-width="1.8" fill="none" stroke-linecap="round" stroke-linejoin="round"/></svg>
<span class="t " style="left:1426px;top:693.5px;">Modifier</span>
<div class="" style="left:1407px;top:717px;width:14px;height:14px;background:#545454;border-radius:3px"></div>
<span class="t " style="left:1426px;top:716.0px;color:#d0d0d0">Tool</span>
<div class="panel" style="left:1288px;top:746.5px;width:277px;height:284.5px;"></div>
<svg style="left:1296.5px;top:755.5px" width="12" height="12" viewBox="-6 -6 12 12"><path d="M-4 -2.0 L0 2.0 L4 -2.0" fill="none" stroke="#d8d8d8" stroke-width="1.3" stroke-linecap="round" stroke-linejoin="round"/></svg>
<span class="t " style="left:1313px;top:754.0px;">Group Sockets</span>
<svg style="left:1542px;top:758px;" width="13" height="6" viewBox="0 0 13 6"><rect x="0.0" y="0.0" width="1.4" height="1.4" fill="#5c5c5c"/><rect x="0.0" y="3.4" width="1.4" height="1.4" fill="#5c5c5c"/><rect x="3.4" y="0.0" width="1.4" height="1.4" fill="#5c5c5c"/><rect x="3.4" y="3.4" width="1.4" height="1.4" fill="#5c5c5c"/><rect x="6.8" y="0.0" width="1.4" height="1.4" fill="#5c5c5c"/><rect x="6.8" y="3.4" width="1.4" height="1.4" fill="#5c5c5c"/><rect x="10.2" y="0.0" width="1.4" height="1.4" fill="#5c5c5c"/><rect x="10.2" y="3.4" width="1.4" height="1.4" fill="#5c5c5c"/></svg>
<div class="" style="left:1298.5px;top:785.5px;width:225.0px;height:144.5px;background:#2b2b2b;border-radius:4px"></div>
<div class="" style="left:1304px;top:792px;width:214px;height:20.5px;background:#4772b3;border-radius:3px"></div>
<span class="t " style="left:1348px;top:794.5px;color:#fff">Geometry</span>
<svg style="left:1495px;top:796px;" width="12" height="12" viewBox="0 0 12 12"><circle cx="6" cy="6" r="4.6" fill="#00d6a3" stroke="#10251f" stroke-width="1"/></svg>
<svg style="left:1329.5px;top:821px;" width="12" height="12" viewBox="0 0 12 12"><circle cx="6" cy="6" r="4.6" fill="#00d6a3" stroke="#1a1a1a" stroke-width="1"/></svg>
<span class="t " style="left:1348px;top:819.5px;color:#d0d0d0">Geometry</span>
<svg style="left:1329.5px;top:846px;" width="12" height="12" viewBox="0 0 12 12"><circle cx="6" cy="6" r="4.6" fill="#a1a1a1" stroke="#1a1a1a" stroke-width="1"/></svg>
<span class="t " style="left:1348px;top:844.5px;color:#d0d0d0">Size X</span>
<svg style="left:1404.5px;top:917px;" width="13" height="6" viewBox="0 0 13 6"><rect x="0.0" y="0.0" width="1.4" height="1.4" fill="#777"/><rect x="0.0" y="3.4" width="1.4" height="1.4" fill="#777"/><rect x="3.4" y="0.0" width="1.4" height="1.4" fill="#777"/><rect x="3.4" y="3.4" width="1.4" height="1.4" fill="#777"/><rect x="6.8" y="0.0" width="1.4" height="1.4" fill="#777"/><rect x="6.8" y="3.4" width="1.4" height="1.4" fill="#777"/><rect x="10.2" y="0.0" width="1.4" height="1.4" fill="#777"/><rect x="10.2" y="3.4" width="1.4" height="1.4" fill="#777"/></svg>
<div class="" style="left:1534.5px;top:785.5px;width:20.5px;height:20.5px;background:#2b2b2b;border-radius:4px 4px 0 0"></div>
<svg style="left:1538.5px;top:789.5px;" width="12" height="12" viewBox="0 0 12 12"><path d="M6 1 V11 M1 6 H11" stroke="#e6e6e6" stroke-width="1.3" fill="none"/></svg>
<div class="" style="left:1534.5px;top:807px;width:20.5px;height:21px;background:#545454;border-radius:0 0 4px 4px"></div>
<svg style="left:1538.5px;top:811.5px;" width="12" height="12" viewBox="0 0 12 12"><path d="M1.5 6 H10.5" stroke="#cfcfcf" stroke-width="1.3" fill="none"/></svg>
<div class="" style="left:1534.5px;top:837.5px;width:20.5px;height:20.5px;background:#2b2b2b;border-radius:4px"></div>
<svg style="left:1538.7px;top:842px" width="12" height="12" viewBox="-6 -6 12 12"><path d="M-4 -2.0 L0 2.0 L4 -2.0" fill="none" stroke="#e6e6e6" stroke-width="1.4" stroke-linecap="round" stroke-linejoin="round"/></svg>
<span class="t " style="right:204.5px;top:941.0px;color:#d0d0d0">Type</span>
<div class="tf" style="left:1407px;top:938.5px;width:147.5px;height:20.0px;"></div>
<svg style="left:1413.5px;top:942.5px;" width="12" height="12" viewBox="0 0 12 12"><circle cx="6" cy="6" r="4.6" fill="#00d6a3" stroke="#10251f" stroke-width="1"/></svg>
<span class="t " style="left:1435.5px;top:941.0px;">Geometry</span>
<svg style="left:1541.5px;top:943.5px" width="12" height="12" viewBox="-6 -6 12 12"><path d="M-3.5 -1.75 L0 1.75 L3.5 -1.75" fill="none" stroke="#ddd" stroke-width="1.4" stroke-linecap="round" stroke-linejoin="round"/></svg>
<span class="t " style="right:204.5px;top:969.5px;color:#d0d0d0">Description</span>
<div class="tf" style="left:1407px;top:966.5px;width:147.5px;height:20.0px;"></div>
<div class="" style="left:1407px;top:1004px;width:14px;height:14px;background:#545454;border-radius:3px"></div>
<span class="t " style="left:1426px;top:1003.0px;color:#d0d0d0">Hide Value</span>
<div class="panel" style="left:1288px;top:1033.5px;width:277px;height:28.0px;"></div>
<svg style="left:1296.5px;top:1042px" width="12" height="12" viewBox="-6 -6 12 12"><path d="M-2.0 -4 L2.0 0 L-2.0 4" fill="none" stroke="#d8d8d8" stroke-width="1.3" stroke-linecap="round" stroke-linejoin="round"/></svg>
<span class="t " style="left:1313px;top:1040.5px;">Animation</span>
<svg style="left:1542px;top:1045px;" width="13" height="6" viewBox="0 0 13 6"><rect x="0.0" y="0.0" width="1.4" height="1.4" fill="#5c5c5c"/><rect x="0.0" y="3.4" width="1.4" height="1.4" fill="#5c5c5c"/><rect x="3.4" y="0.0" width="1.4" height="1.4" fill="#5c5c5c"/><rect x="3.4" y="3.4" width="1.4" height="1.4" fill="#5c5c5c"/><rect x="6.8" y="0.0" width="1.4" height="1.4" fill="#5c5c5c"/><rect x="6.8" y="3.4" width="1.4" height="1.4" fill="#5c5c5c"/><rect x="10.2" y="0.0" width="1.4" height="1.4" fill="#5c5c5c"/><rect x="10.2" y="3.4" width="1.4" height="1.4" fill="#5c5c5c"/></svg>
</div></body></html>
